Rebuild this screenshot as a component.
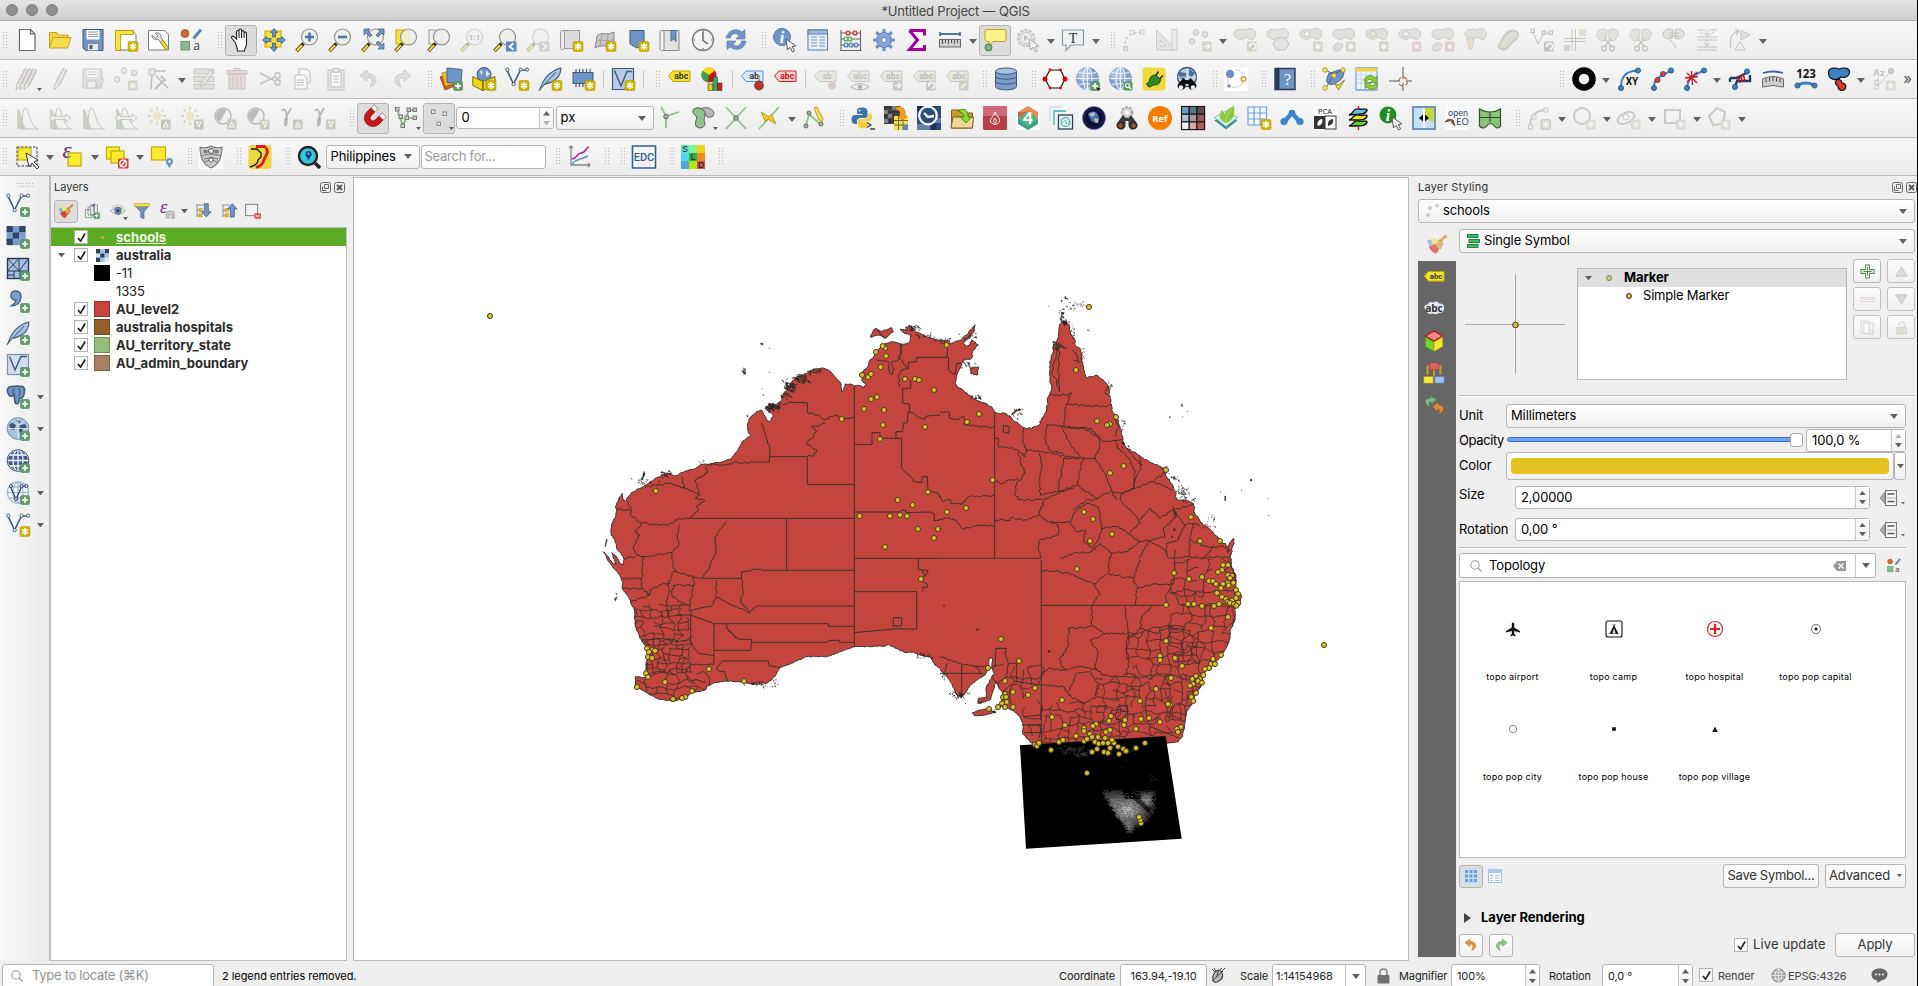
import React from "react";

/* ---------- seeded helpers for the map drawing ---------- */
type Pt = [number, number];
function rng(seed: number) {
  let s = seed;
  return () => {
    s = (s * 1664525 + 1013904223) % 4294967296;
    return s / 4294967296;
  };
}
const parse = (t: string): Pt[] =>
  t.trim().split(/\s+/).map((p) => p.split(",").map(Number) as Pt);

function rough(t: string, amp: number, seed = 7): string {
  const r = rng(seed + t.length * 31);
  const pts = parse(t);
  let out = `M${pts[0][0]} ${pts[0][1]}`;
  for (let i = 1; i < pts.length; i++) {
    const [x0, y0] = pts[i - 1];
    const [x1, y1] = pts[i];
    const d = Math.hypot(x1 - x0, y1 - y0);
    const n = Math.max(1, Math.round(d / 6));
    for (let k = 1; k < n; k++) {
      const f = k / n;
      const o = (r() - 0.5) * 2 * amp;
      out += `L${(x0 + (x1 - x0) * f - ((y1 - y0) / d) * o).toFixed(1)} ${(y0 + (y1 - y0) * f + ((x1 - x0) / d) * o).toFixed(1)}`;
    }
    out += `L${x1} ${y1}`;
  }
  return out;
}
const line = (t: string) => "M" + parse(t).map((p) => p.join(" ")).join("L");

function mesh(x0: number, y0: number, x1: number, y1: number, nx: number, ny: number, seed: number, keep = 0.82): string {
  const r = rng(seed);
  const dx = (x1 - x0) / nx;
  const dy = (y1 - y0) / ny;
  const g: Pt[][] = [];
  for (let j = 0; j <= ny; j++) {
    g.push([]);
    for (let i = 0; i <= nx; i++) g[j].push([x0 + dx * (i + (r() - 0.5) * 0.75), y0 + dy * (j + (r() - 0.5) * 0.75)]);
  }
  const seg = (a: Pt, b: Pt) => {
    const mx = (a[0] + b[0]) / 2 + (r() - 0.5) * dx * 0.45;
    const my = (a[1] + b[1]) / 2 + (r() - 0.5) * dy * 0.45;
    return rough(`${a[0].toFixed(1)},${a[1].toFixed(1)} ${mx.toFixed(1)},${my.toFixed(1)} ${b[0].toFixed(1)},${b[1].toFixed(1)}`, 1.6, Math.floor(r() * 999));
  };
  let out = "";
  for (let j = 0; j <= ny; j++)
    for (let i = 0; i <= nx; i++) {
      if (i < nx && r() < keep) out += seg(g[j][i], g[j][i + 1]);
      if (j < ny && r() < keep) out += seg(g[j][i], g[j + 1][i]);
    }
  return out;
}
function specks(cx: number, cy: number, w: number, h: number, n: number, s: number, seed: number): string {
  const r = rng(seed);
  let out = "";
  for (let i = 0; i < n; i++) {
    const x = cx + (r() + r() - 1) * w;
    const y = cy + (r() + r() - 1) * h;
    out += `M${x.toFixed(1)} ${y.toFixed(1)}l${(r() * s).toFixed(1)} ${((r() - 0.5) * s).toFixed(1)}l${((r() - 0.5) * s).toFixed(1)} ${(r() * s).toFixed(1)}z`;
  }
  return out;
}

/* ---------- map geometry, three sheets at a third of a pixel per unit ---------- */
const W_COAST =
  "1080,183 1066,182 1042,180 1010,170 985,158 965,148 958,135 950,150 930,148 940,158 962,165 960,185 945,192 925,190 905,185 890,190 878,195 868,205 858,215 850,232 840,240 832,262 818,275 808,285 818,292 815,300 828,312 822,322 805,316 793,318 780,312 765,312 762,330 755,335 752,308 735,290 715,270 695,264 670,268 650,280 640,285 620,290 612,300 600,310 600,325 580,340 578,355 560,375 540,372 525,385 550,405 540,425 530,420 515,390 500,395 478,415 473,430 476,460 482,465 455,487 440,515 425,535 400,545 350,553 335,553 315,567 285,573 255,588 235,580 215,585 190,600 160,620 125,637 110,655 105,665 98,655 97,640 85,660 76,680 80,690 78,705 65,735 63,765 75,780 80,805 95,825 102,838 100,855 90,850 80,830 65,818 78,850 70,852 45,820 40,815 60,850 75,868 90,885 98,905 97,925 115,950 125,975 133,990 136,1040 150,1075 168,1100 175,1130 168,1150 168,1170 172,1190 160,1193 136,1190 136,1220 160,1232 180,1245 200,1255 225,1260 260,1262 290,1252 306,1235 330,1235 348,1228 350,1218 380,1207 410,1203 455,1205 475,1210 500,1208 530,1210 545,1200 560,1180 570,1162 600,1152 650,1130 710,1130 760,1112 795,1100 885,1098 895,1093 925,1108 945,1118 970,1116 990,1125 1020,1130 1035,1155 1055,1170 1080,1200";
const E_COAST =
  "0,185 20,195 40,188 60,182 80,165 106,135 100,158 85,172 72,185 76,200 90,195 95,180 115,195 100,210 95,235 70,240 62,260 50,290 45,310 60,325 85,345 120,365 155,380 168,398 200,402 225,425 255,444 275,445 298,435 305,415 320,390 325,350 335,330 330,295 328,260 338,220 340,200 352,180 357,145 362,130 375,125 388,135 393,165 405,180 405,195 420,205 425,230 428,255 437,292 455,290 470,285 490,300 505,320 508,350 515,375 515,390 530,410 540,440 548,480 560,505 590,520 610,535 640,550 668,565 680,590 700,620 712,660 735,660 760,670 765,700 780,725 805,745 825,765 845,785 865,800 880,775 883,790 873,820 873,850 885,880 890,902";
const S_COAST =
  "873,-4 873,20 885,45 890,85 905,110 900,135 885,145 885,180 870,215 870,235 858,265 840,290 820,315 800,325 790,345 785,375 765,405 760,425 740,455 735,490 728,530 715,545 690,548 600,550 400,570 290,556 270,545 248,520 250,495 240,470 215,450 195,440 180,440 185,425 188,400 175,380 168,365 157,400 150,420 115,430 115,415 140,412 138,385 155,350 163,340 155,325 158,295 148,295 145,325 135,345 110,360 90,375 75,400 65,410 50,405 35,370 18,345 0,330";

const W_STRAIGHT = [
  "793,318 793,1100", "652,613 793,613", "538,545 538,530 652,530 652,613", "300,715 793,715", "590,715 590,870", "515,871 793,871",
  "793,835 1080,835", "500,978 793,978", "372,1031 715,1031 715,1039 793,1039", "485,1087 710,1087 720,1081 748,1081 748,1087 793,1087",
  "372,1111 482,1111 485,1078 447,1078 410,1045 410,1032", "258,1005 302,1005 372,1031 372,1153", "793,935 980,935 980,1048", "793,1058 920,1046 980,1048",
  "910,1013 935,1013 935,1038 910,1038 910,1013", "985,835 985,868 1015,872 1005,890 997,870", "1000,890 997,905 1012,912 1012,922 998,922 998,935",
  "793,493 846,493 846,458 870,458 870,475 935,475 935,566 970,598 970,604 995,608 997,590 1012,590 1014,632 1045,640 1058,668 1080,656",
  "793,696 930,696 935,690 948,692 948,698 1020,696 1033,702 1033,722 1080,715", "938,325 938,370 958,372 958,395", "938,325 962,325 962,300",
  "1080,232 980,232 980,245 955,247 955,265 935,270", "918,475 918,455 938,455 940,430 952,428 955,395 970,400 985,412 1005,418 1010,408 1050,405 1065,395 1080,395",
  "578,375 600,367 652,368 652,398", "338,895 455,895 455,875 480,873 490,868 515,868", "398,1143 535,1143 537,1157 570,1162", "302,1005 302,1090 325,1120 372,1127",
  "1064,182 1064,222 1075,225 1076,275",
];
const W_ROUGH = [
  "652,398 680,405 705,420 735,405 755,415 793,413", "705,430 665,440 680,455 650,490 680,510 672,525 652,530", "515,430 525,460 538,500 538,530", "538,545 430,548 400,555 350,553",
  "348,558 350,580 315,600 330,645 285,625 275,590", "285,625 240,610 190,615 165,625", "330,645 315,655 345,662 318,680 325,690 300,715", "115,665 122,690 120,705 155,730 235,735 268,715 300,715",
  "80,687 118,690", "155,730 135,755 150,765 130,800 140,825 160,830 245,818 265,800 262,770 270,735", "102,838 135,830", "245,818 250,860 258,875", "160,830 155,895 98,895",
  "258,875 245,880 240,910 220,910 180,930 180,945 155,925 155,895", "258,875 310,890 338,895", "410,725 375,770 378,820 355,870 335,895", "310,890 312,915 250,915 245,945 270,965 298,978 310,915",
  "380,900 378,950 365,980 302,990 302,1005", "378,950 435,980 480,998 500,978", "455,895 460,940 450,965 480,998", "412,1203 405,1175 380,1168 398,1143", "372,1153 300,1155 285,1180 300,1200 348,1205",
  "928,190 935,215 925,240 905,245 912,270 905,285 895,265 895,245 860,240", "935,270 925,290 930,320", "935,195 930,235 955,265", "98,925 155,925", "120,965 150,955 180,945", "235,900 238,940 230,970 235,1010", "410,1045 440,1075",
];
const E_STRAIGHT = ["164,395 164,835", "0,835 304,835", "304,835 304,900", "190,436 208,440 206,460 190,456 190,436", "0,232 22,232 22,200 14,200", "25,232 25,270 45,285 50,250 64,250"];
const E_ROUGH = [
  "0,395 25,395 30,415 55,420 70,408 75,435 164,442", "0,648 10,665 30,657 35,672 68,672 85,650 164,646", "0,718 30,715 50,722 70,748 100,738 164,737",
  "164,470 175,475 175,500 230,508 255,530 260,510 250,490 250,445", "260,510 305,515 380,530 420,535", "235,515 240,545 255,580 230,610 225,645 240,660 310,657", "164,600 185,612 205,600 235,598",
  "300,520 305,560 298,590 300,645 355,635 370,535 430,535 465,535", "355,635 410,615 430,535", "410,615 470,655 515,632 495,580 465,535 480,500 480,475 430,445 380,445", "375,440 320,435 315,480 330,510 370,520",
  "365,440 390,490 420,530", "380,372 500,380 515,375", "328,345 380,345 395,338 380,372 370,440 450,445 490,485 530,480 550,480", "358,335 350,300 335,280 345,240 355,200 378,205 350,190", "356,205 358,335",
  "530,480 530,500 570,540 585,580 580,625 545,640 515,632 530,660", "164,720 210,722 215,712 250,722 295,705 315,655 400,625", "295,705 330,727 390,727 400,700 440,670 475,680 485,745 475,780 455,810",
  "400,690 440,660 470,658", "330,727 355,735 355,765 300,780 295,805 304,835", "390,727 410,755 435,750 430,785 455,800", "340,870 345,850 375,830 400,820 455,815 480,790", "485,745 535,740 600,785 560,815 515,820 480,790",
  "600,785 625,780 675,810 685,835 690,870", "545,640 540,660 590,710 600,730 570,760", "600,720 630,685 660,715 700,690", "700,680 710,710 670,745 675,770 625,785", "545,640 585,625 640,605 695,630", "580,625 585,600 605,555 600,530",
  "640,605 670,580", "700,690 735,735 760,730 780,740", "760,730 750,775 745,830 685,835", "680,820 680,790 715,780 735,735", "515,820 505,880 505,900", "625,785 600,830 605,860 590,900", "750,780 800,800 860,800", "780,835 830,830 870,830",
  "780,835 825,865 800,880", "304,870 340,870 400,880 455,905", "398,210 410,225 415,245 400,240", "705,715 700,690 760,672", "745,830 790,835 820,800", "525,410 535,440 525,470", "560,505 590,540 605,555", "505,320 495,340 512,350",
];
const S_STRAIGHT = ["304,0 304,552", "304,136 680,136", "230,300 230,365 304,375", "165,320 168,265 200,265 195,280 205,310 230,310", "0,340 130,340", "65,315 65,400", "245,495 304,495", "252,518 304,518", "250,470 304,465", "630,500 720,535"];
const S_ROUGH = [
  "304,30 390,40 460,72 480,100 455,140 455,195 495,222 560,220", "510,-10 505,42 580,55 600,0", "500,42 462,72", "580,55 592,85 585,135", "592,85 640,72 700,72 705,-30", "680,136 678,105 700,72", "690,100 740,88 800,98 845,90",
  "555,136 565,220 560,260 567,300 560,345", "635,140 605,170 600,205 570,235", "455,200 385,205 385,260 358,300 375,330 420,320 470,330", "304,338 330,325 375,330", "495,222 450,240 475,280 465,325 490,345 565,352 620,352",
  "600,205 650,220 680,205 740,210", "304,375 370,380 385,405 430,430", "385,395 410,340 450,335 475,370 465,410", "430,430 470,410 540,420", "0,290 70,315 145,320", "205,310 200,350 175,370", "200,350 230,365", "20,310 15,335", "100,315 130,345",
];

const W_DOTS =
  "197,633 755,417 886,204 878,198 858,216 888,228 872,261 816,285 834,291 843,282 945,297 975,297 987,300 1032,330 843,357 861,351 822,387 882,390 879,435 870,477 1005,441 1014,636 923,660 968,675 809,708 900,708 930,705 951,708 984,747 1044,747 1032,774 885,801 993,897 171,1105 187,1110 195,1112 177,1116 174,1131 186,1134 168,1180 174,1191 225,1206 357,1167 462,1203 141,1221 306,1233 249,1257 286,1251 276,1254 -300,108";
const E_DOTS =
  "447,81 408,270 20,195 117,402 81,426 158,600 78,684 21,696 471,423 510,432 501,435 528,411 551,558 510,579 678,570 432,696 459,717 516,762 450,783 753,711 780,783 840,783";
const S_DOTS =
  "411,27 702,39 747,57 786,51 849,15 864,15 846,30 834,36 864,45 876,47 870,54 807,63 819,63 828,72 849,72 864,68 866,76 880,68 843,84 831,99 888,90 894,102 846,111 858,117 864,125 876,121 888,114 870,129 882,132 895,128 889,137 837,132 822,138 786,138 762,132 744,132 678,135 864,171 813,204 678,243 843,285 819,297 660,288 660,300 705,294 813,312 825,312 807,324 795,327 726,318 790,345 693,354 768,348 757,357 780,357 774,363 786,368 759,372 750,377 768,399 754,411 760,423 648,387 600,423 690,434 684,432 603,477 627,474 660,486 723,501 711,507 714,516 588,507 555,480 552,495 513,468 507,483 468,492 459,498 432,504 432,513 498,516 510,510 450,522 375,495 408,528 336,471 366,420 285,384 264,405 237,303 183,237 144,324 195,363 219,396 195,402 189,412 198,411 200,426 186,430 174,441 195,441 219,441 147,447 333,570 285,554 291,558 297,549 357,546 369,540 432,543 441,537 456,531 474,531 495,534 465,546 476,551 489,549 504,549 522,549 471,567 456,576 492,576 504,579 510,564 516,540 534,560 537,582 550,567 558,573 588,564 615,549 441,639 603,790 601,780 597,771 1152,255";

const RED = "#c4453d";
const INK = "#37302d";

function Dots({ pts }: { pts: string }) {
  return (
    <g fill="#e3c220" stroke="#3d3826" strokeWidth="3">
      {parse(pts).map(([x, y], i) => (
        <circle key={i} cx={x} cy={y} r="7.6" />
      ))}
    </g>
  );
}

/* brightness of the island relief, brightest on the central plateau */
function Relief() {
  const r = rng(99);
  const cells: React.ReactNode[] = [];
  for (let y = 690; y < 822; y += 3)
    for (let x = 482; x < 650; x += 3) {
      const left = 484 + Math.max(0, y - 705) * 0.68 + (y < 700 ? (700 - y) * 0.6 : 0);
      const right = y < 745 ? 646 : y < 785 ? 644 - (y - 745) * 0.5 : 604 - (y - 785) * 0.8;
      const notch = y < 715 && x > 545 && x < 600 && r() < 0.75;
      if (x < left || x > right || notch) continue;
      const edge = Math.min(x - left, right - x, 822 - y, y - 686);
      if (edge < 14 && r() > 0.25 + edge / 18) continue;
      const near = Math.max(0, 1 - Math.hypot((x - 562) / 1.2, y - 748) / 55) + Math.max(0, 0.8 - Math.hypot(x - 620, y - 718) / 32) + Math.max(0, 0.35 - Math.hypot(x - 515, y - 720) / 90) + Math.max(0, 0.5 - Math.hypot(x - 565, y - 800) / 40);
      const valley = Math.abs(y - 722 - (x - 595) * 0.9) < 9 && x > 575 && x < 630;
      const c = Math.round(Math.min(245, (valley ? 25 : 45) + near * 190 * (0.45 + r() * 0.8) + r() * 30) * (valley ? 0.5 : 1));
      cells.push(<rect key={`${x}-${y}`} x={x} y={y} width="3" height="3" fill={`rgb(${c},${c},${c})`} />);
    }
  return <>{cells}</>;
}

function AustraliaMap() {
  const wc = rough(W_COAST, 1.6);
  const ec = rough(E_COAST, 2.4);
  const sc = rough(S_COAST, 1.4);
  return (
    <svg className="block h-full w-full" viewBox="354 178 1054 782" preserveAspectRatio="xMinYMin slice">
      <defs>
        <clipPath id="cw"><path d={wc} /></clipPath>
        <clipPath id="cs"><path d={line(S_COAST) + "L0 -4"} /></clipPath>
      </defs>
      <g transform="translate(590 280) scale(.33333)" fill="none" stroke={INK} strokeWidth="3">
        <path d={wc} fill={RED} />
        <path d={rough("842,172 850,150 860,145 875,155 905,143 910,155 885,175 865,165 842,172", 2)} fill={RED} />
        <path d="M860 148L872 162L885 174" />
        <g clipPath="url(#cw)" strokeWidth="2.6">
          <path d={mesh(130, 975, 300, 1080, 6, 6, 4)} />
          <path d={mesh(150, 1080, 300, 1180, 8, 7, 5, 0.85)} />
          <path d={mesh(140, 1180, 350, 1250, 7, 3, 6, 0.75)} />
        </g>
        {W_STRAIGHT.map((t) => <path key={t} d={line(t)} />)}
        {W_ROUGH.map((t) => <path key={t} d={rough(t, 3)} />)}
        <g fill="#2b2624" stroke="#2b2624" strokeWidth="1.1">
          <path d={specks(598, 318, 24, 22, 34, 10, 11)} />
          <path d={specks(630, 293, 32, 12, 30, 10, 25)} />
          <path d={specks(672, 272, 30, 9, 16, 8, 18)} />
          <path d={specks(545, 380, 24, 12, 40, 11, 12)} />
          <path d={specks(582, 345, 14, 16, 12, 8, 13)} />
          <path d={specks(160, 610, 60, 22, 26, 4, 14)} />
          <path d={specks(222, 582, 20, 9, 18, 7, 15)} />
          <path d={specks(500, 1212, 52, 8, 28, 6, 16)} />
          <path d={specks(555, 1205, 18, 22, 10, 4, 17)} />
          <path d={specks(965, 145, 32, 12, 22, 7, 19)} />
          <path d={specks(1005, 165, 36, 10, 12, 6, 20)} />
          <path d={specks(1000, 1130, 32, 14, 16, 6, 21)} />
          <path d={specks(460, 270, 8, 13, 8, 8, 22)} />
          <path d={specks(78, 955, 12, 22, 7, 6, 23)} />
          <path d={specks(330, 545, 14, 8, 5, 3, 24)} />
          <path d="M511 190l8 0l0 4l-6 0zM49 778l3 0l-5 22l-2-2zM162 574l3 8l-3 8l-4-4zM152 598l10-14l-4 16zM470 405l5 3l-3 3z" />
          <path d="M538 205h1v2zM538 277h1v2zM518 344h3v3zM515 326h2v1zM1060 976h4v3h-4z" />
        </g>
        <Dots pts={W_DOTS} />
      </g>
      <g transform="translate(940 280) scale(.33333)" fill="none" stroke={INK} strokeWidth="3">
        <path d={ec + "L0 902"} fill={RED} stroke="none" />
        <path d={ec} />
        <path d={rough("92,265 115,260 112,285 92,280 92,265", 2)} fill={RED} />
        <path d="M215 405q8-18 28-16q-14 2-24 14z" fill={RED} />
        {E_STRAIGHT.map((t) => <path key={t} d={line(t)} />)}
        {E_ROUGH.map((t) => <path key={t} d={rough(t, 3)} />)}
        <g fill="#2b2624" stroke="#2b2624" strokeWidth="1.1">
          <path d={specks(362, 100, 7, 20, 14, 8, 31)} />
          <path d={specks(372, 55, 16, 10, 6, 6, 32)} />
          <path d={specks(395, 82, 20, 18, 22, 3, 33)} />
          <path d={specks(422, 72, 20, 10, 12, 3, 34)} />
          <path d={specks(374, 124, 14, 6, 14, 8, 35)} />
          <path d={specks(348, 198, 14, 16, 22, 8, 36)} />
          <path d={specks(400, 160, 10, 30, 18, 3, 37)} />
          <path d={specks(424, 225, 12, 40, 20, 3, 38)} />
          <path d={specks(442, 152, 10, 8, 4, 3, 39)} />
          <path d={specks(85, 168, 30, 12, 18, 6, 40)} />
          <path d={specks(80, 255, 24, 12, 12, 6, 41)} />
          <path d={specks(104, 352, 18, 7, 14, 8, 42)} />
          <path d={specks(232, 398, 18, 20, 12, 6, 43)} />
          <path d={specks(508, 315, 10, 22, 14, 4, 44)} />
          <path d={specks(555, 490, 14, 20, 12, 6, 45)} />
          <path d={specks(672, 570, 18, 14, 12, 5, 46)} />
          <path d={specks(705, 595, 20, 10, 18, 4, 47)} />
          <path d={specks(728, 635, 24, 22, 34, 5, 48)} />
          <path d={specks(740, 662, 28, 9, 14, 5, 49)} />
          <path d={specks(815, 712, 18, 10, 12, 3, 50)} />
          <path d={specks(800, 735, 30, 14, 12, 4, 51)} />
          <path d={specks(548, 430, 8, 24, 10, 4, 52)} />
          <path d={specks(866, 812, 8, 18, 10, 6, 53)} />
          <path d={specks(0, 178, 32, 8, 12, 6, 54)} />
          <path d="M725 372h2v8h-2zM688 410h3v3h-3zM742 394h2v2zM727 410h2v2zM931 598h5v5h-5zM903 631h3v1zM854 648h3v14h-3zM840 636h3v1zM983 655h2v1zM985 706h2v2zM325 78h2v1zM702 743l6 6l-8 4zM695 768h4v4h-4zM0 744h3v5h-3z" />
        </g>
      </g>
      <g transform="translate(940 560) scale(.33333)" fill="none" stroke={INK} strokeWidth="3">
        <path d={sc + "L0 -4"} fill={RED} stroke="none" />
        <path d={sc} />
        <path d={rough("97,458 120,450 150,445 158,455 168,457 135,465 105,467 97,458", 1)} fill={RED} />
        <g clipPath="url(#cs)" strokeWidth="2.6">
          <path d={mesh(310, 430, 560, 552, 10, 6, 61, 0.72)} />
          <path d={mesh(470, 350, 690, 480, 10, 6, 62, 0.72)} />
          <path d={mesh(570, 205, 780, 350, 7, 5, 63, 0.78)} />
          <path d={mesh(690, 140, 890, 300, 6, 6, 64, 0.78)} />
          <path d={mesh(680, 350, 800, 480, 6, 6, 65, 0.78)} />
          <path d={mesh(560, 470, 720, 520, 5, 2, 66, 0.7)} />
          <path d={mesh(705, -30, 890, 135, 6, 5, 67, 0.62)} />
          <path d={mesh(165, 320, 300, 470, 5, 5, 68, 0.62)} />
          <path d={mesh(245, 500, 304, 552, 2, 2, 69, 0.6)} />
        </g>
        {S_STRAIGHT.map((t) => <path key={t} d={line(t)} />)}
        {S_ROUGH.map((t) => <path key={t} d={rough(t, 3)} />)}
        <g fill="#2b2624" stroke="#2b2624" strokeWidth="1.1">
          <path d={specks(60, 408, 18, 10, 20, 6, 71)} />
          <path d={specks(10, 350, 12, 12, 8, 4, 72)} />
          <path d={specks(34, 400, 12, 10, 7, 6, 73)} />
          <path d={specks(160, 455, 10, 5, 8, 4, 74)} />
          <path d={specks(84, 400, 6, 8, 4, 4, 75)} />
          <path d={specks(118, 428, 8, 4, 6, 4, 76)} />
          <path d="M324 272h6v5h-6zM110 207h5v4h-5zM10 136h4v3h-4zM75 430h3v2z" />
        </g>
        <path d="M240 556L677 528L725 836L258 866Z" fill="#000" stroke="none" />
        <g stroke="none">
          <path d={specks(395, 568, 55, 14, 90, 9, 81)} fill="#2b2b2b" />
          <path d={specks(422, 582, 26, 9, 60, 5, 82)} fill="#5d5d5d" />
          <path d={specks(545, 568, 60, 14, 80, 6, 83)} fill="#3b3b3b" />
          <path d={specks(638, 655, 14, 18, 20, 4, 84)} fill="#555" />
          <path d={specks(558, 602, 3, 3, 4, 4, 85)} fill="#777" />
          <Relief />
        </g>
        <g transform="translate(0 -840)"><Dots pts={E_DOTS} /></g>
        <Dots pts={S_DOTS} />
      </g>
    </svg>
  );
}

/* ---------- icon parts ---------- */
const B = "#7b9ccd";
const D = "#3f5878";
const G = "#8d8d85";
const Plus = <g><rect x="14.5" y="14.5" width="9" height="9" rx="1.5" fill="#5f9e62" stroke="#4c8450" strokeWidth=".6" /><path d="M19 16.3v5.4M16.3 19h5.4" stroke="#fff" strokeWidth="1.8" /></g>;
const Star = <g><rect x="14" y="13.5" width="10" height="10" rx="1.5" fill="#d0b400" stroke="#a89200" strokeWidth=".5" /><path d="M19 15v7M16 16.8l6 3.4M16 20.2l6-3.4" stroke="#fff" strokeWidth="1.6" /></g>;
const Badge = ({ t, c = "#b9b9a5" }: { t?: string; c?: string }) => (
  <g><rect x="14" y="13.5" width="9.5" height="10" rx="1.3" fill={c} />
    {t === "up" && <path d="M16.5 21l2.3-5 2.3 5z" fill={c} stroke="#fff" strokeWidth="1.1" />}
    {t === "dn" && <path d="M16.5 16l2.3 5 2.3-5z" fill={c} stroke="#fff" strokeWidth="1.1" />}
    {t === "x" && <path d="M16.8 16.5l4 4M20.8 16.5l-4 4" stroke="#fff" strokeWidth="1.4" />}
    {t === "r" && <path d="M15.8 18.5h5.5m-2.3-2.6l2.6 2.6-2.6 2.6" stroke="#fff" strokeWidth="1.5" fill="none" />}
    {t === "o" && <path d="M19.5 21.5a3 3 0 1 0-3-3l1.6-1" stroke="#fff" strokeWidth="1.3" fill="none" />}
    {t === "e" && <path d="M16 21.5l4.500-5" stroke="#fff" strokeWidth="1.7" />}
    {!t && <path d="M18.8 15.3v6.4M16 16.9l5.6 3.2M16 20.1l5.6-3.2" stroke="#fff" strokeWidth="1.3" />}
  </g>
);
const mag = (over?: React.ReactNode, under?: React.ReactNode) => (
  <g>{under}
    <path d="M8.5 15.5L1.5 23" stroke="#2b2b1f" strokeWidth="3.4" /><path d="M7 17.3L1.8 22.7" stroke="#f6dd2e" strokeWidth="2.1" />
    <circle cx="14.5" cy="9" r="8" fill="#eef0ea" fillOpacity=".85" stroke="#8b8b85" strokeWidth="1.1" />{over}</g>
);
const vline = (
  <g fill="none" stroke={D} strokeWidth="1.6"><path d="M2.2 3.5L8.5 17L15.5 3h6" /><g fill="#fff" strokeWidth="1"><circle cx="2.3" cy="2.7" r="1.6" /><circle cx="15.6" cy="2.6" r="1.6" /><circle cx="22" cy="2.6" r="1.6" /><circle cx="8.6" cy="17.2" r="1.6" /></g></g>
);
const feather = <g><path d="M1.5 23.5C5 14 9 5 22.8 1C23 9 17 15 6 17.5" fill="#a9c1e3" stroke={D} strokeWidth="1.1" /><path d="M1 23.5L18 5" stroke={D} strokeWidth="1" /></g>;
const globe = (c = "#7b9ccd", bg = "#dfe8f5") => (
  <g fill="none" stroke={c} strokeWidth="1.3"><circle cx="12" cy="11.5" r="10.6" fill={bg} /><ellipse cx="12" cy="11.5" rx="5" ry="10.6" /><path d="M12 1v21M1.5 11.5h21M3 6h18M3 17h18" /></g>
);
const bigGlobe = (
  <g fill="none"><circle cx="11.5" cy="11.5" r="11" fill="#7fa3d4" stroke="#8d9fb8" /><circle cx="8" cy="8" r="6.5" fill="#b9cdea" opacity=".7" /><g stroke="#f1f5fb" strokeWidth="1.2"><ellipse cx="11.5" cy="11.5" rx="4.500" ry="10.800" /><path d="M11.500 .6v22M.800 11.500h21.500M3 5.500q8.500 2 17 0M3 17.500q8.500-2 17 0" /></g></g>
);
const blob = <path d="M1 6C1 1 8 .5 12 2C17-1 23 1 22.5 6C22 11 19 13 15 10C11 8 10 13 6 11C3 10 1 9 1 6Z" fill="#cfd2c8" stroke="#a5a79c" strokeWidth="1" />;
const blobHole = <g>{blob}<ellipse cx="8" cy="6" rx="3" ry="2.4" fill="#f3f3f3" stroke="#a5a79c" /></g>;
const scissors = <g stroke={G} fill="none" strokeWidth="1.2"><path d="M9 11l6 7M15 11l-6 7" /><circle cx="8" cy="20.5" r="2.3" /><circle cx="16" cy="20.5" r="2.3" /></g>;
const blobCut = <g>{<path d="M11 2C6-1 0 3 1 8C2 13 8 14 10 11ZM13 2C18-1 24 3 22 8C20 13 15 14 13 11Z" fill="#cfd2c8" stroke="#a5a79c" />}{scissors}</g>;
const tag = (fill: string, st: string, text = "abc", tc = "#333") => (
  <g><path d="M1.5 9L6 4h17v10.500H6z" fill={fill} stroke={st} strokeWidth="1" /><text x="14.2" y="12.2" fontSize="8.6" fontWeight="700" textAnchor="middle" fill={tc} fontFamily="Roboto, sans-serif">{text}</text></g>
);
const hist = <g><path d="M2 23V3c3 0 4 4 5 9s2 9 5 11z" fill="#8fa889" /><path d="M6 23C8 14 7 2 10.5 2S15 22 23.500 23z" fill="none" stroke="#a58080" /></g>;
const cursor = <path d="M13 11l1.500 11 2.600-2.800L19.500 24l2-1.200-2.300-4.300 3.800-.6z" fill="#fff" stroke="#555" strokeWidth="1" />;
const node = (x: number, y: number, c = "#3d82c4") => <circle cx={x} cy={y} r="2.6" fill={c} stroke="#1d3f66" strokeWidth=".7" />;
const styleIcon = <g><circle cx="5" cy="5.500" r="4" fill="#d0692e" stroke="#9c4a1c" strokeWidth=".7" /><path d="M13.500 10.500L21 1.500" stroke="#5f84b8" strokeWidth="3" /><rect x="1" y="13.500" width="8.500" height="8.500" fill="#8cb98c" stroke="#5f9462" strokeWidth=".9" /><text x="16.500" y="22" fontSize="12" textAnchor="middle" fill="#333" fontFamily="Open Sans, sans-serif">a</text></g>;
const undo = (c: string, s: string) => <path d="M10 3L3 8.500l7 5.500v-3.500c5 0 6.500 3 3 9.500c9-3 8-13-3-13.500z" fill={c} stroke={s} strokeWidth=".8" />;
const redo = (c: string, s: string) => <g transform="matrix(-1 0 0 1 24 0)">{undo(c, s)}</g>;
const pencil = (x: number, f = "#c9cdbd") => <g transform={`translate(${x} 0)`}><path d="M3 22.500l1.500-6.500L12 1.500l4 2L8.500 18z" fill={f} stroke={G} strokeWidth=".9" /><path d="M3 22.500l1.500-6.500 4 2z" fill="#f0f0f0" stroke={G} strokeWidth=".7" /><path d="M6.500 17L14 2.500" stroke="#eee" strokeWidth="1" /></g>;
const checker = (a: string, b: string, c: string) => (
  <g>{[[0, 0, b], [6, 0, c], [12, 0, b], [0, 6, c], [6, 6, a], [12, 6, c], [0, 12, b], [6, 12, c], [12, 12, c]].map(([x, y, f], i) => <rect key={i} x={Number(x) + 0.5} y={Number(y) + 1} width="6.200" height="6.200" fill={String(f)} />)}</g>
);
const cube = <g stroke="#7a1a1a" strokeWidth=".8"><path d="M12 1l9.500 5.500L12 12 2.500 6.500z" fill="#f08a8a" stroke="#c40f0f" strokeWidth="1.300" /><path d="M2.500 7.500L12 13v10.500L2.500 18z" fill="#76d92e" stroke="#3f8a12" /><path d="M21.500 7.500L12 13v10.500l9.500-5.500z" fill="#f4ea2c" stroke="#a79a10" /></g>;
const broom = <g><path d="M14 10L22.500 2.500" stroke="#c9973b" strokeWidth="3.200" /><path d="M9 9l6-1.500 3.500 4-3 6-5-1z" fill="#d8a548" stroke="#a37b28" strokeWidth=".8" /><path d="M1 8q5 0 8-3l5 4-8 6z" fill="#f4e36a" /><path d="M1 8l4.500-.8L8 13l-4 2z" fill="#7fb0e0" /><path d="M3 15l7-3 4 6-2.500 4.500q-6-1-8.500-7.500z" fill="#d9402f" /></g>;
const cyl = <g fill={B} stroke={D} strokeWidth="1"><path d="M1.500 4.500v15c0 4.500 21 4.500 21 0v-15" /><path d="M1.500 9.500c0 3.500 21 3.500 21 0M1.500 14.500c0 3.500 21 3.500 21 0" fill="none" /><ellipse cx="12" cy="4.200" rx="10.500" ry="3.200" fill="#a9c1e3" /></g>;
const binocs = <g fill="#111"><path d="M8.500 11L3 17a3.800 3.800 0 1 0 7.500 3v-3h3v3a3.800 3.800 0 1 0 7.500-3l-5.500-6-2 2h-3z" /><circle cx="6" cy="20.500" r="2.200" fill="#eee" /><circle cx="18" cy="20.500" r="2.200" fill="#eee" /></g>;
const snapV = <g fill="none" stroke="#8fbf8a" strokeWidth="2"><path d="M3 3l6 17L15 4h6M12 12h8" /><g fill="#cfcfcf" stroke="#777" strokeWidth="1"><rect x="1.500" y="1.500" width="3.500" height="3.500" /><rect x="13" y="2" width="3.500" height="3.500" /><rect x="19" y="2" width="3.500" height="3.500" /><rect x="5" y="9" width="3.500" height="3.500" /><rect x="11" y="10" width="3.500" height="3.500" /><rect x="19" y="10" width="3.500" height="3.500" /><rect x="7" y="18" width="3.500" height="3.500" /></g></g>;
const sun = <g><circle cx="10" cy="10" r="4.500" fill="#e8dc9a" /><path d="M10 1v3M10 16v3M1 10h3M16 10h3M3.500 3.500l2 2M14.500 14.500l2 2M16.500 3.500l-2 2M3.500 16.500l2-2" stroke="#b8b070" strokeWidth="1.500" /></g>;
const contrast = <g><circle cx="10" cy="10" r="8" fill="#eee" stroke="#777" strokeWidth="1.500" /><path d="M10 3A7 7 0 0 0 10 17z" fill="#777" transform="rotate(30 10 10)" /></g>;
const gamma = <path d="M3 5c3-5 5 3 5 8 0 8-3 8-2 2 1-5 4-9 6-13" fill="none" stroke="#666" strokeWidth="1.700" />;

const ICONS: Record<string, React.ReactNode> = {
  new: <path d="M4.500 1.500h11L20 6v16.500H4.500zM15.500 1.500V6H20" fill="#fff" stroke="#6a6a6a" strokeWidth="1.200" />,
  open: <g fill="#f2d33b" stroke="#c79f1c"><path d="M1.500 20V4.500h7l2 2.500H20v3" /><path d="M1.500 20L5 9.500h18L19.500 20z" fill="#f8de4d" /></g>,
  save: <g><path d="M2 1.500h20v21H4.500L2 20z" fill="#6f94c8" stroke={D} /><rect x="5.500" y="2" width="13" height="9.500" fill="#fff" /><path d="M7 4h10M7 6.300h10M7 8.600h10" stroke="#999" /><rect x="6.500" y="15.500" width="11" height="7" fill="#e9e9e9" stroke="#777" strokeWidth=".7" /><rect x="8.500" y="17" width="3" height="4" fill={D} /></g>,
  layout: <g><path d="M3 2.500h15l4 4v15.500H3z" fill="#fff" stroke="#777" /><path d="M1.500 2.500h18v4h-13v16h-5z" fill="#f6e23a" stroke="#a8920e" strokeWidth=".8" />{Star}</g>,
  wrench: <g><path d="M1.500 2.500h16l4 4v15.500h-20z" fill="#fff" stroke="#777" /><path d="M5 7a4 4 0 0 0 6 4l8 11 2.500-2L14 9.500A4 4 0 0 0 8.500 5L11 8 8.500 10z" fill="#e5e5da" stroke="#777" strokeWidth=".9" /><path d="M13.500 14l5.500 8 2.500-2-6-8z" fill="#f6dd2e" stroke="#8d7b10" strokeWidth=".7" /></g>,
  style: styleIcon,
  hand: <path d="M6 14L3 10.500c-1.500-2 1-3 2.200-1.700L7.500 11V4c0-2 2.500-2 2.500 0V2.500c0-2 2.600-2 2.600 0V4c0-1.900 2.500-1.900 2.500 0v1.500c0-1.800 2.400-1.800 2.400 0V16c0 3-2 4-2 7H8.500c0-3-1-5-2.500-9zM10 4v6M12.600 4v6M15.100 5v5" fill="#fff" stroke="#222" strokeWidth="1.100" />,
  pan: <g><rect x="3" y="3" width="16" height="16" fill="#f6e23a" stroke="#c4a800" /><path d="M12 .5l3.500 4h-2V9h-3V4.500h-2zM12 23.500l3.500-4h-2V15h-3v4.500h-2zM.5 12l4-3.500v2H9v3H4.500v2zM23.500 12l-4-3.500v2H15v3h4.500v2z" fill="#6f94c8" stroke={D} strokeWidth=".8" /></g>,
  zin: mag(<path d="M14.500 4.500v9M10 9h9" stroke="#4c74ad" strokeWidth="2.600" />),
  zout: mag(<path d="M10 9h9" stroke="#4c74ad" strokeWidth="2.600" />),
  full: mag(<path d="M3 1h6L7 3l4 4-2 2-4-4-2 2zM23 1h-6l2 2-4 4 2 2 4-4 2 2zM23 21h-6l2-2-4-4 2-2 4 4 2-2z" fill="#6f94c8" stroke={D} strokeWidth=".7" />),
  zsel: mag(null, <rect x="2" y="2" width="13" height="14" fill="#f6e23a" stroke="#c4a800" />),
  zlay: mag(null, <rect x="2" y="2" width="13" height="14" fill="#eee" stroke="#999" />),
  znat: <g opacity=".35">{mag(<text x="14.500" y="12" fontSize="8" fontWeight="700" textAnchor="middle" fill="#555" fontFamily="Roboto">1:1</text>)}</g>,
  zlast: mag(<g><rect x="13" y="13.500" width="10.500" height="10" fill="#5c86bd" /><path d="M20.500 15.300l-4 3.200 4 3.200" fill="none" stroke="#fff" strokeWidth="1.800" /></g>),
  znext: <g opacity=".35">{mag(<g><rect x="13" y="13.500" width="10.500" height="10" fill="#999" /><path d="M16.500 15.300l4 3.200-4 3.200" fill="none" stroke="#fff" strokeWidth="1.800" /></g>)}</g>,
  nmap: <g><path d="M3 2.500h17.500v18H3z" fill="#dcdcdc" stroke="#999" /><path d="M1.500 4c0-2 4-2 4 0v16c0 2-4 2-4 0z" fill="#eee" stroke="#999" />{Star}</g>,
  n3d: <g><path d="M5 8c5-5 9 0 17-4v12c-7 4-12 0-19 4z" fill="#c9c9c9" stroke="#888" /><path d="M4 14c6-4 11 1 18-3M10 5L8 18M16 6l-1 13" fill="none" stroke="#999" strokeWidth=".8" />{Star}</g>,
  nbm: <g><path d="M5 2.500h14v15L12 20 5 16z" fill="#6f94c8" stroke={D} />{Star}</g>,
  sbm: <g><path d="M4 2.500h17v20H4z" fill="#e2e2e2" stroke="#888" /><path d="M2 4c0-2 4-2 4 0v17c0 2-4 2-4 0z" fill="#f3f3f3" stroke="#888" /><path d="M13 2.500h5v11l-2.500-2.500L13 13z" fill="#6f94c8" stroke={D} strokeWidth=".8" /></g>,
  clock: <g><circle cx="12" cy="12" r="10.500" fill="#f4f4f4" stroke="#777" strokeWidth="1.300" /><path d="M12 4v8.500l5 3.500" fill="none" stroke="#555" strokeWidth="1.300" /><path d="M12 2.500v1.500M12 20v1.500M2.500 12H4M20 12h1.500" stroke="#555" /></g>,
  refresh: <g fill="#6f94c8" stroke="#5578aa" strokeWidth=".6"><path d="M2 10C3 3 12-1 18 4l3-2.500V11h-9l3-3.500C11 4 7 6 6.500 10z" /><path d="M22 13c-1 8-10 11-16 6l-3 2.500V13h9l-3 3.500c4 3 8 1 8.500-3.500z" /></g>,
  info: <g><circle cx="9" cy="9" r="8.500" fill="#6f94c8" stroke="#5578aa" /><text x="9" y="15" fontSize="16" fontWeight="700" fontStyle="italic" textAnchor="middle" fill="#fff" fontFamily="Liberation Serif, serif">i</text>{cursor}</g>,
  table: <g><rect x="2" y="2" width="19.500" height="20" fill="#e8f0fa" stroke="#5578aa" /><rect x="2" y="2" width="19.500" height="4" fill="#9fb9de" stroke="#5578aa" /><path d="M5 9h6M5 12h6M5 15h6M5 18h6M13.500 9h5.500M13.500 12h5.500M13.500 15h5.500M13.500 18h5.500" stroke="#6f94c8" strokeWidth="1.200" /></g>,
  abacus: <g fill="none" stroke="#666" strokeWidth="1.100"><path d="M2 22V2M21.500 22V2M1 22.500h21.500M2 5h19.500M2 11h19.500M2 17h19.500" /><circle cx="9" cy="5" r="2" stroke="#c22" fill="#fbb" /><circle cx="16" cy="5" r="2" stroke="#c22" fill="#fbb" /><circle cx="7" cy="11" r="2" stroke="#4a4" fill="#cec" /><circle cx="11" cy="11" r="2" stroke="#4a4" fill="#cec" /><circle cx="7" cy="17" r="2" stroke="#47a" fill="#bdf" /><circle cx="12" cy="17" r="2" stroke="#47a" fill="#bdf" /><circle cx="17" cy="17" r="2" stroke="#47a" fill="#bdf" /></g>,
  gear: <g><path d="M12 1v22M1 12h22M4.200 4.200l15.600 15.600M19.800 4.200L4.200 19.800" stroke="#6f94c8" strokeWidth="3.200" /><circle cx="12" cy="12" r="7.500" fill="#86a6d6" stroke="#5f84b8" /><circle cx="12" cy="12" r="2.600" fill="#f3f3f3" stroke="#5f84b8" /></g>,
  sigma: <path d="M4.500 2.500h15v5M19.500 17v4.500h-15l8-9.500-8-9.500" fill="none" stroke="#a3009b" strokeWidth="3" />,
  ruler: <g><path d="M2 6h20M2 4v4M22 4v4" stroke="#4c74ad" strokeWidth="1.800" /><rect x="1.500" y="11.500" width="21" height="7.500" fill="#cfcfcf" stroke="#666" /><path d="M4.500 12v4M7.500 12v3M10.500 12v4M13.500 12v3M16.500 12v4M19.500 12v3" stroke="#444" strokeWidth=".9" /></g>,
  tip: <g><path d="M4 1.500h17q2 0 2 2v8q0 2-2 2H10l-4 4.500v-4.500H4q-2 0-2-2v-8q0-2 2-2z" fill="#fdf38a" stroke="#b9a21a" /><circle cx="5.500" cy="19.500" r="3.500" fill="#7fae84" stroke="#4f7a54" /></g>,
  play: <g opacity=".5"><circle cx="10" cy="10" r="8" fill="#ddd" stroke="#999" strokeWidth="2.500" strokeDasharray="3 1.500" /><circle cx="10" cy="10" r="5.500" fill="#eee" stroke="#999" /><path d="M8 7l5 3-5 3z" fill="#999" />{cursor}</g>,
  text: <g><path d="M1.500 2h21v15H10l-5 5.500V17H1.500z" fill="#eef2f4" stroke="#8499a5" strokeWidth="1.200" /><text x="12" y="14.500" fontSize="14" textAnchor="middle" fill="#333" fontFamily="Liberation Serif, serif">T</text></g>,
  dArc: <g opacity=".4" fill="none" stroke={G}><path d="M3 21V14C4 8 9 5 20 4" strokeDasharray="3 2" strokeWidth="1.500" /><rect x="1.500" y="18.500" width="4" height="4" /><rect x="18" y="2" width="4" height="4" /><rect x="8" y="2.500" width="4" height="4" /></g>,
  dTri: <g opacity=".4" fill="#ddd0d0" stroke={G}><path d="M1.500 2v20h20z" /><path d="M5 12v6h6z" fill="#f4f4f4" /><rect x="17" y="1.500" width="5" height="20.500" fill="#e4e4d4" /></g>,
  dMove: <g opacity=".5"><circle cx="8" cy="4.500" r="2.800" fill="#ccc" stroke="#999" /><circle cx="17" cy="6.500" r="2.800" fill="#ccc" stroke="#999" /><circle cx="4" cy="13.500" r="2.800" fill="#ccc" stroke="#999" /><Badge t="r" /></g>,
  dRot: <g opacity=".55">{blob}<Badge t="o" /></g>,
  dSimp: <g opacity=".5">{blob}<path d="M11 10h8l4 6-4 6h-8l-4-6z" fill="#d5d9dc" stroke={G} /></g>,
  dRing: <g opacity=".55">{blobHole}<Badge /></g>,
  dPart: <g opacity=".55">{blob}<ellipse cx="6" cy="19" rx="5" ry="3.500" transform="rotate(-30 6 19)" fill="#cfd2c8" stroke="#a5a79c" /><Badge /></g>,
  dFill: <g opacity=".55">{blob}<ellipse cx="8" cy="6" rx="3.500" ry="2.700" fill="#d8dbc0" stroke="#a5a79c" /><Badge /></g>,
  dDelR: <g opacity=".5">{blobHole}<Badge t="x" c="#d0b0b0" /></g>,
  dDelP: <g opacity=".5">{blob}<ellipse cx="6" cy="19" rx="5" ry="3.500" transform="rotate(-30 6 19)" fill="#cfd2c8" stroke="#a5a79c" /><Badge t="x" c="#d0b0b0" /></g>,
  dResh: <g opacity=".5">{blob}<path d="M3 10c0 4 2 5 2 11 5 1 4-6 5-11z" fill="#d8cdb2" stroke="#b5a98f" /></g>,
  dOff: <g opacity=".5"><path d="M3 15c3-3 3-9 10-12 6-2 10 2 7 7-3 4-7 5-9 9-3 5-12 2-8-4z" fill="#c9cdb9" stroke="#a5a79c" strokeWidth="2" /></g>,
  dVrot: <g opacity=".5"><path d="M2.500 3L8 16 14 5h7" fill="none" stroke={G} /><rect x="1" y="1" width="3.500" height="3.500" fill="#ddd" stroke={G} /><rect x="12" y="3" width="3.500" height="3.500" fill="#ddd" stroke={G} /><rect x="19" y="3" width="3.500" height="3.500" fill="#ddd" stroke={G} /><Badge t="o" c="#999" /></g>,
  dTrim: <g opacity=".45"><path d="M9 1v22M12.500 1v22M1 10.500h22M1 13.500h22" stroke={G} /><rect x="1" y="17" width="6" height="6" fill="#c9a9a9" /><rect x="16" y="1" width="7" height="7" fill="#c9c9a9" /></g>,
  dSplit: <g opacity=".5">{blobCut}</g>,
  dMerge: <g opacity=".5"><path d="M11 2C6-1 0 3 1 7s7 5 9 3zM13 2c5-3 10 1 9 5s-7 5-9 3zM7 5h10M7 8h10" fill="#cfd2c8" stroke={G} /><path d="M8 12c3 2 4 4 6 8" stroke={G} fill="none" /></g>,
  dAlign: <g opacity=".45" stroke={G} fill="none"><path d="M2 2h8M14 2h8M2 9h20M2 12h20M2 19h20M2 22h20M12 2v5M9 5l3 3 3-3M12 12v5M9 15l3 3 3-3M5 4l3 2M19 4l-3 2" /></g>,
  dFlip: <g opacity=".45" stroke={G} fill="none"><path d="M3 20C1 10 4 5 10 3M7 1l4 2-3 4" strokeWidth="1.300" /><path d="M13 2l9 5-9 5z" fill="#ccc" /><path d="M12 13l5 9H7z" /></g>,
  ePens: <g opacity=".5">{pencil(-2, "#c9b5b5")}{pencil(2, "#b9b9b0")}{pencil(6, "#b9a5a5")}</g>,
  ePen: <g opacity=".5">{pencil(3)}</g>,
  eSave: <g opacity=".4"><path d="M2 2h19v19H2z" fill="#c5c9c9" stroke={G} /><rect x="6" y="3" width="11" height="7" fill="#fff" /><path d="M7 5h9M7 7.500h9" stroke={G} /><rect x="6" y="14" width="9" height="7" fill="#eee" stroke={G} /><path d="M14 22l2-5 5-6 2 2-5 6z" fill="#ccc" stroke={G} /></g>,
  eAdd: <g opacity=".5"><circle cx="10" cy="3.500" r="2.800" fill="#ddd" stroke="#999" /><circle cx="20" cy="6" r="2.800" fill="#ddd" stroke="#999" /><circle cx="3" cy="12.500" r="2.800" fill="#ddd" stroke="#999" /><Badge /></g>,
  eVert: <g opacity=".5" stroke={G} fill="#ddd"><path d="M4 22L5 4l14 0M9 9l12 12" fill="none" strokeWidth="1.600" /><path d="M2 2h6v6H2z" /><path d="M8 22l10-10M14 9l5 5" strokeWidth="2" /></g>,
  eAttr: <g opacity=".45"><path d="M2 2h20v5H2zM2 9.500h20v5H2zM2 17h20v5H2z" fill="#c9cdb9" stroke={G} /><path d="M8 20l2-5 8-12 3 2-8 12z" fill="#e5d5d5" stroke={G} /></g>,
  eDel: <g opacity=".4" fill="#d3b7b7" stroke="#8f7d7d"><path d="M4 7h16v15H4zM2 3.500h20V7H2zM9 1.500h6v2H9z" /><path d="M8 9v11M12 9v11M16 9v11" /></g>,
  eCut: <g opacity=".45" stroke={G} fill="none" strokeWidth="1.600"><path d="M2 6l15 8M2 17l15-7" /><circle cx="19.500" cy="15.500" r="2.600" /><circle cx="19.500" cy="8.500" r="2.600" /></g>,
  eCopy: <g opacity=".5" fill="#fff" stroke={G}><path d="M8 2h8l3 3v11H8z" /><path d="M4 8h9l3 3v11H4z" /><path d="M6 13h7M6 15.500h7M6 18h7" /></g>,
  ePaste: <g opacity=".5" fill="#ddd" stroke={G}><path d="M4 3h16v20H4z" /><path d="M7 5h10v15H7z" fill="#fff" /><path d="M9 1.500h6V5H9z" /><path d="M9 9h6M9 12h6M9 15h6" /></g>,
  eUndo: <g opacity=".45">{undo("#c5bfb5", G)}</g>,
  eRedo: <g opacity=".45">{redo("#c5c9c0", G)}</g>,
  dsm: <g><path d="M1 10l10-4 5 13-10 4z" fill="#d0592e" stroke="#8d3b1c" strokeWidth=".8" /><path d="M3 6l12-3 3 13-12 3z" fill="#f0c030" stroke="#a07b10" strokeWidth=".8" /><path d="M8 1l15 1.500-1 14-14-1z" fill="#6f94c8" stroke={D} strokeWidth=".9" />{Plus}</g>,
  gpkg: <g><circle cx="12" cy="7.500" r="7" fill="#6f94c8" stroke={D} /><path d="M8 3l3 2-2 3zM14 3l4 4-4 3z" fill="#dfe8f5" /><path d="M.8 9.500l10 5v9l-10-5zM23 9.500l-12 5v9L23 18z" fill="#f0d31c" stroke="#7d6b08" />{Star}</g>,
  shp: <g>{vline}{Star}</g>,
  spl: <g>{feather}{Star}</g>,
  mem: <g><path d="M5 2v18M8.500 2v18M12 2v18M15.500 2v18M19 2v18" stroke={D} strokeWidth="1.200" /><rect x="2" y="5.500" width="20" height="11" fill="#6f94c8" stroke={D} />{Star}</g>,
  virt: <g><path d="M1.500 1.500h21v21h-21z" fill="#b9cbe6" stroke={D} strokeWidth="1.200" /><path d="M3.500 3.500L10 19 16 4.500h5" fill="none" stroke={D} strokeWidth="1.400" />{Star}</g>,
  lab: tag("#f5e528", "#b8a400"),
  diag: <g><circle cx="9" cy="8" r="7.500" fill="#c8150f" /><path d="M9 8V.5a7.500 7.500 0 0 1 6 3zM9 8L2.500 4A7.500 7.500 0 0 1 9 .5z" fill="#f2e21c" /><path d="M9 8L2.500 4a7.500 7.500 0 0 0 5 11.300z" fill="#3aa64b" /><rect x="8" y="17" width="5" height="6.500" fill="#f2c81c" stroke="#222" strokeWidth=".5" /><rect x="13" y="10" width="4.500" height="13.500" fill="#2faf5f" stroke="#222" strokeWidth=".5" /><rect x="17.500" y="16" width="4.500" height="7.500" fill="#d02018" stroke="#222" strokeWidth=".5" /></g>,
  labPin: <g>{tag("#dbe9fb", "#5b8fd8", "ab")}<path d="M19 8v8" stroke="#999" strokeWidth="1.500" /><circle cx="19" cy="18.500" r="4.500" fill="#b5352f" stroke="#7d1f1b" strokeWidth=".7" /></g>,
  labRed: tag("#fbd5d5", "#e01b1b", "abc", "#d01010"),
  l1: <g opacity=".4">{tag("#ddddc8", G, "ab", "#777")}<circle cx="19" cy="18.500" r="4" fill="#b99" /></g>,
  l2: <g opacity=".4">{tag("#ddddc8", G, "abc", "#777")}<path d="M5 20q9-7 18 0q-9 6-18 0z" fill="#eee" stroke="#555" /><circle cx="14" cy="20" r="2.200" fill="#555" /></g>,
  l3: <g opacity=".45">{tag("#ddddc8", G, "abc", "#777")}<Badge t="r" c="#999" /></g>,
  l4: <g opacity=".45">{tag("#ddddc8", G, "abc", "#777")}<Badge t="o" c="#999" /></g>,
  l5: <g opacity=".45">{tag("#ddddc8", G, "abc", "#777")}<Badge t="e" c="#a9a98d" /></g>,
  db: cyl,
  hex: <g><path d="M7 3h10.500L22 12l-4.500 9H7L2 12z" fill="#fff" stroke="#111" strokeWidth="1.200" />{[[7, 3, 1.400], [17.500, 3, 1.400], [22, 12, 2.500], [17.500, 21, 1.400], [7, 21, 1.400], [2, 12, 2.500]].map(([x, y, r], i) => <circle key={i} cx={x} cy={y} r={r} fill="#e00" />)}</g>,
  gAdd: <g>{bigGlobe}{Plus}<path d="M20.500 21h4l-2 3z" fill="#222" /></g>,
  gFind: <g>{bigGlobe}<rect x="14.500" y="14.500" width="9" height="9" rx="1.500" fill="#5f9e62" /><circle cx="18.500" cy="18.500" r="2" fill="none" stroke="#fff" strokeWidth="1.200" /><path d="M20 20l2 2" stroke="#fff" strokeWidth="1.200" /></g>,
  plug: <g><rect x=".5" y=".5" width="23" height="23" rx="3" fill="#f0d93c" /><path d="M4.500 17l3-3q0-6 6.500-6l4.500 4.500q-.5 6-7 5.500L8 20q-3-.5-3.500-3z" fill="#2f8a1c" stroke="#174a0c" strokeWidth="1" /><path d="M14 8.500l2.500-4M17.500 12l3.500-3.500" stroke="#222" strokeWidth="1.500" /></g>,
  gBin: <g><circle cx="12" cy="10" r="9.500" fill="#b5cbe6" stroke="#3a4f6b" strokeWidth="1.300" /><path d="M4 5l7 1 1 4-5 2-4-2zM14 2l6 4-4 5-2-3z" fill="#4a6c94" /><path d="M2.500 10h19M12 1v18" stroke="#f1f5fb" strokeWidth=".8" />{binocs}</g>,
  orb: <g><rect width="24" height="24" fill="#fff" /><circle cx="6" cy="7" r="4.200" fill="#6f8fc0" /><circle cx="19.500" cy="12" r="2.300" fill="#fff" stroke="#d99a2c" strokeWidth="1.500" /><circle cx="5" cy="19" r="1.800" fill="#6f8fc0" /><path d="M12 3c4 0 6 3 7 6M19 15c-1 4-6 6-11 5M4 12v5" fill="none" stroke="#bbb" strokeWidth=".8" /></g>,
  help: <g><path d="M2 1.500h20v21H2z" fill="#6f94c8" stroke="#2d3b50" strokeWidth="1.400" /><path d="M2 1.500h4.500v21H2z" fill="#2d3b50" /><text x="14.500" y="17.500" fontSize="16" textAnchor="middle" fill="#fff" fontFamily="Liberation Serif, serif">?</text></g>,
  topo: <g><path d="M7 6c5 0 8-4 15-3.500 0 8-2 10-9 14-5 3-10-1-8-5z" fill="#6f94c8" stroke={D} strokeWidth=".9" /><path d="M3 3l9 4L21 3M12 7L4 21" fill="none" stroke={D} strokeWidth=".9" />{[[3, 3], [21, 3], [12, 8.500], [3, 21]].map(([x, y], i) => <circle key={i} cx={x} cy={y} r="2.300" fill="#f2e84a" stroke="#8d8420" strokeWidth=".7" />)}<path d="M13 17l3.500 6L22.500 13l-6 5z" fill="#f6e23a" stroke="#7d7010" strokeWidth=".8" /></g>,
  sync: <g><path d="M1 1h21v22H1z" fill="#eef5fd" stroke="#7ba2d4" strokeWidth="1.300" /><path d="M1 1h21v3.500H1z" fill="#f3d24a" /><path d="M1 8h21M1 12h21M1 16h21M6 4v18M11 4v18M16 4v18" stroke="#b8cfec" strokeWidth=".8" /><path d="M9 14c1-6 8-7 11-3l2-1.500v6h-6l1.500-2c-3-2-5-1-5.500 1zM23 17c-1 6-8 7-11 3l-2 1.500v-6h6l-1.500 2c3 2 5 1 5.500-1z" fill="#8fc93a" stroke="#4f8a1a" strokeWidth=".7" /></g>,
  cross: <g fill="none"><path d="M15 0v12M15 16v8M1 14h11M18 14h6" stroke="#444" strokeWidth=".9" /><circle cx="15" cy="14.500" r="4.500" stroke="#c0504a" strokeWidth="1.100" strokeDasharray="4.500 2.500" /></g>,
  ring: <circle cx="12" cy="12" r="8.500" fill="none" stroke="#000" strokeWidth="6.500" />,
  xy: <g><path d="M4 20C4 9 10 4 20 3.500" fill="none" stroke="#3d82c4" strokeWidth="2" />{node(4, 21)}{node(21, 3.500)}<text x="15" y="18" fontSize="10" fontWeight="700" textAnchor="middle" fill="#111" fontFamily="Roboto, sans-serif">XY</text></g>,
  arcR: <g><path d="M4 20C4 10 12 9 21 3.500" fill="none" stroke="#3d82c4" strokeWidth="2" />{node(4, 21)}{node(21, 3.500)}{node(7.500, 13, "#e33")}{node(13, 7, "#e33")}</g>,
  arcX: <g><path d="M4 20C5 12 10 8 21 3.500" fill="none" stroke="#3d82c4" strokeWidth="2" />{node(4, 21)}{node(21, 3.500)}<path d="M8.500 4l1 14M2 11l13-1.500M4 6l10 10M14 5L4 15" stroke="#d01010" strokeWidth="1.300" /></g>,
  zig: <g><path d="M2 11h9v-1l9-5M2 11v4M7 20l2-6h13V8" fill="none" stroke="#1d3f66" strokeWidth="2.400" />{node(19, 4.500)}{node(7, 20)}<path d="M9 9l3 7M12 8l3 7M15 7l2 7" stroke="#d01010" strokeWidth="1.500" /></g>,
  rul2: <g><path d="M2 6q10-3 20 0" stroke="#3d5f9c" fill="none" strokeWidth="1.800" /><path d="M1.500 12q10.500-5 21 0v8q-10.500-3-21 0z" fill="#cfcfcf" stroke="#666" /><path d="M5 11.500v4M8.500 10.500v4M12 10v4M15.500 10.500v4M19 11.500v4" stroke="#444" /></g>,
  n123: <g><text x="12" y="11" fontSize="11.500" fontWeight="700" textAnchor="middle" fill="#111" fontFamily="Open Sans, sans-serif">123</text><path d="M4 18q8-4 16 0" fill="none" stroke="#3d82c4" strokeWidth="3" />{node(3.500, 18.500)}{node(20.500, 18.500)}</g>,
  blobs: <g stroke="#111" strokeWidth="1.200"><path d="M1.500 6C1 1 8 0 12 2c5-2 11-1 10.500 3.500C22 10 18 11 14 10 9 15 1.500 12 1.500 6z" fill="#3d82c4" /><path d="M9 14c2-3 6-1 6 2 3 0 5 3 3 6-3 3-7 1-7-3-2-1-3-3-2-5z" fill="#e33a30" /></g>,
  az: <g opacity=".4"><text x="7" y="9" fontSize="9" fontWeight="700" textAnchor="middle" fill="#777">Az</text><text x="4.500" y="18" fontSize="9" textAnchor="middle" fill="#777">d</text><path d="M5 20L19 4" stroke={G} />{node(19, 4, "#999")}<circle cx="4.500" cy="20.500" r="2" fill="#eee" stroke={G} /><Badge /></g>,
  h1: <g opacity=".42">{hist}</g>,
  h2: <g opacity=".42">{hist}<path d="M1 12l5-4v2.500h12V8l5 4-5 4v-2.500H6V16z" fill="#eee" stroke={G} /></g>,
  br: <g opacity=".5">{sun}<Badge t="up" c="#9c9c85" /></g>,
  br2: <g opacity=".5">{sun}<Badge t="dn" c="#9c9c85" /></g>,
  co: <g opacity=".45">{contrast}<Badge t="up" c="#9c9c85" /></g>,
  co2: <g opacity=".45">{contrast}<Badge t="dn" c="#9c9c85" /></g>,
  ga: <g opacity=".45">{gamma}<Badge t="up" c="#9c9c85" /></g>,
  ga2: <g opacity=".45">{gamma}<Badge t="dn" c="#9c9c85" /></g>,
  magnet: <g transform="rotate(45 12 12)"><path d="M3.500 2h5.500v10a3 3 0 0 0 6 0V2h5.500v10a8.500 8.500 0 0 1-17 0z" fill="#cc1414" stroke="#7d0a0a" strokeWidth=".8" /><path d="M3.500 2h5.500v4H3.500zM15 2h5.500v4H15z" fill="#fff" stroke="#999" strokeWidth=".6" /></g>,
  snapv: snapV,
  pts: <g fill="#e9e9e9" stroke="#888"><rect x="4.500" y="4" width="3.500" height="3.500" /><rect x="16" y="6" width="3.500" height="3.500" /><rect x="10" y="16" width="3.500" height="3.500" /></g>,
  t1: <g fill="none" stroke="#8fbf8a" strokeWidth="1.800"><path d="M3 1l5 9v12M8 10l13-4" /><circle cx="8" cy="10.500" r="2.300" fill="#aaa" stroke="#666" strokeWidth="1" /></g>,
  t2: <g><path d="M10 3c4-3 12-1 13 4 0 5-6 5-8 3z" fill="#b5b5b5" stroke="#666" /><path d="M3 3c4-3 11 0 11 5 0 4-2 5 0 9 1 4-6 7-9 3-2-4 2-7 0-10C2 8 1 5 3 3z" fill="#8fc48a" stroke="#555" /></g>,
  t3: <g fill="none" stroke="#8fbf8a" strokeWidth="1.800"><path d="M2 1l20 22M22 1L2 23" /><circle cx="12" cy="12" r="2.300" fill="#aaa" stroke="#666" strokeWidth="1" /></g>,
  t4: <g><path d="M22 1L2 23" stroke="#8fbf8a" strokeWidth="1.800" /><path d="M5 5l7 6 3-2 3 10-7-6-3 2z" fill="#f6cf1c" stroke="#a88b10" strokeWidth=".8" transform="rotate(-8 12 12)" /></g>,
  t5: <g fill="none" stroke="#8fbf8a" strokeWidth="1.800"><path d="M4 20L7 8l11 10" /><circle cx="7" cy="7" r="2" fill="#aaa" stroke="#666" strokeWidth="1" /><circle cx="4" cy="20" r="2" fill="#aaa" stroke="#666" strokeWidth="1" /><circle cx="19" cy="18" r="2" fill="#aaa" stroke="#666" strokeWidth="1" /><path d="M12 2l3-1 6 12-1 3-3-2z" fill="#f0dc5a" stroke="#a88b10" strokeWidth=".8" /></g>,
  py: <g><path d="M11 1.500c-5 0-5 2-5 4V8h5.500v1H4c-2.500 0-3.500 2-3.500 4.500S1.500 18 4 18h2v-2.500c0-2 1.500-3.500 3.500-3.500H14c1.500 0 2.500-1 2.500-2.500v-4c0-3-1.500-4-5.500-4z" fill="#3a74a8" /><path d="M12 22.500c5 0 5-2 5-4V16h-5.500v-1H18c2.500 0 3.500-2 3-5-.3-2-1.500-3-3-3h-.500v2.500c0 2-1.500 3.500-3.500 3.500H9.500C8 13 7 14 7 15.500v4c0 2 2 3 5 3z" fill="#f7cf3d" /><circle cx="8.500" cy="4.500" r="1" fill="#fff" /><path d="M16 16.500l4 2.500-4 2.500M19 23h5" stroke="#444" fill="none" strokeWidth="1.300" /></g>,
  grid1: <g><rect width="16" height="18" fill="#333" /><path d="M0 4h4v4H0zM8 0h4v4H8zM4 8h4v4H4zM0 13h4v4H0z" fill="#888" /><path d="M4 0v18M8 0v18M12 0v18M0 4h16M0 8h16M0 12h16" stroke="#666" strokeWidth=".6" /><rect x="10" y="10" width="14" height="14" fill="#f6e23a" /><path d="M10 14.500h14M10 19h14M14.500 10v14M19 10v14" stroke="#555" strokeWidth=".9" /><path d="M12 1c8-1 10 3 9 9h2.500L18.500 14.500 13.500 10h3c0-4-1-6-4.500-6z" fill="#f0a01c" stroke="#b36f0c" strokeWidth=".5" /><rect x="19" y="19" width="5" height="5" fill="#5f84b8" /></g>,
  clk2: <g><rect width="24" height="24" fill="#2b4a80" /><path d="M14 12h10v5H14zM0 18h13v6H0z" fill="#5f7fae" /><path d="M14 17h5v7h-5zM0 0h5v5H0z" fill="#1c3158" /><circle cx="11" cy="9.500" r="8.800" fill="#2b4a80" stroke="#fff" strokeWidth="2.200" /><path d="M7 7l4 4 6-1" stroke="#fff" strokeWidth="2.300" fill="none" /></g>,
  fold: <g><path d="M1.500 4h8l2 3h11v15h-21z" fill="#c99b3a" stroke="#7d5c18" /><path d="M1 22l2-11h20.500l-1 11z" fill="#efd79a" stroke="#7d5c18" /><path d="M8 5c6-4 11 0 10 6h3.500L16 17l-5.500-6H14c0-3-3-5-6-6z" fill="#8ede2a" stroke="#3f7d0f" strokeWidth=".9" /></g>,
  fire: <g><rect width="24" height="24" rx="1.500" fill="#b83f44" /><path d="M1.500 0h21Q24 0 24 1.500V10H0V1.500Q0 0 1.500 0z" fill="#cf6a78" /><path d="M12 6c1 4 5 5 4.500 9-1 4.500-8 4.500-9 0C7 12 10 12 12 6zM12 12c2 2 1.500 5 0 5s-2-2.500 0-5z" fill="none" stroke="#fff" strokeWidth="1" /></g>,
  four: <g><rect width="24" height="24" fill="#fff" /><path d="M12 0L2 6v6l10-6 10 6V6z" fill="#ef8a4a" /><path d="M2 6v12l10-12z" fill="#d8653c" /><path d="M2 12v6l10 6 10-6v-6L12 20z" fill="#3f9e8a" /><path d="M2 12l10-7 10 7-10 9z" fill="#57b082" /><text x="12" y="18" fontSize="17" fontWeight="900" textAnchor="middle" fill="#fff" fontFamily="Lato, sans-serif">4</text></g>,
  stack: <g fill="none" strokeWidth="1.300"><path d="M1 15V1h12" stroke="#c5e3e8" /><path d="M5 19V5h12" stroke="#38b3b8" /><rect x="9.500" y="9" width="14" height="14" fill="#f7fafa" stroke="#2d3f4f" /><circle cx="16.500" cy="16" r="4.300" stroke="#38b3b8" /><path d="M13.500 17l3-3 1 4 3-3" stroke="#38b3b8" strokeWidth=".9" /></g>,
  earth: <g><circle cx="12" cy="12" r="11.500" fill="#14184a" stroke="#7d82c0" strokeWidth="1" strokeDasharray="2 1" /><circle cx="12" cy="12" r="8.500" fill="#0c0f2c" /><path d="M6 8c2-3 6-3 8-2 3 3 4 7 2 11-4 1-8-2-10-9z" fill="#3f6fc0" /><path d="M7 8l5-2 1 3-3 2zM12 12l4 1 0 4-3-1z" fill="#c8c090" /></g>,
  binoc: <g><circle cx="12" cy="6.500" r="5.200" fill="#dcdcdc" stroke="#aaa" strokeWidth="2.400" strokeDasharray="2.400 1.300" /><circle cx="12" cy="6.500" r="2" fill="#fff" /><path d="M8 9l-6.500 9a4.500 4.500 0 1 0 9 2v-5h3v5a4.500 4.500 0 1 0 9-2L16 9l-2.500 3h-3z" fill="#3b3b3b" /><circle cx="5.500" cy="19.500" r="3" fill="#a0522d" stroke="#111" /><circle cx="18.500" cy="19.500" r="3" fill="#a0522d" stroke="#111" /></g>,
  ref: <g><circle cx="12" cy="12" r="12" fill="#f57c00" /><text x="12" y="15.500" fontSize="9.500" fontWeight="700" textAnchor="middle" fill="#fff" fontFamily="Open Sans, sans-serif">Ref</text></g>,
  bivar: <g stroke="#111" strokeWidth="1.100">{["#6fa0b5", "#5a7a8a", "#5f4a55", "#a8c5cf", "#a89aa5", "#9c5a62", "#ededed", "#d3a9a9", "#b55a5a"].map((c, i) => <rect key={i} x={0.5 + (i % 3) * 7.700} y={0.5 + Math.floor(i / 3) * 7.700} width="7.700" height="7.700" fill={c} />)}</g>,
  leaf: <g><path d="M12 23.500L.5 14.500 12 8l11.500 6.500z" fill="#3f8f9c" /><path d="M12 20.500L.5 11.500 12 5l11.500 6.500z" fill="#e3f0ea" stroke="#6fb0a0" strokeWidth=".8" /><path d="M12 17C4 14 5 8 8 4c1 2 2 3 3 4 1-4 5-6 9-8 1 8 0 14-8 17z" fill="#8bc83f" /><path d="M12 17c-1-5 2-9 5-13" fill="none" stroke="#b9e070" strokeWidth="1" /></g>,
  gridS: <g><path d="M1 1h18.500v18H1zM7 1v18M13 1v18M1 7h18.500M1 13h18.500" fill="#f4f9ff" stroke="#6f9fd4" strokeWidth="1.200" />{Star}</g>,
  tri3: <g><path d="M4 16L12 7l8 9" fill="none" stroke="#3a86cc" strokeWidth="4.500" strokeLinejoin="round" /><g fill="#3a86cc"><circle cx="12" cy="7" r="3.300" /><circle cx="4" cy="15.500" r="3.600" /><circle cx="20" cy="15.500" r="3.600" /></g></g>,
  pca: <g><rect width="24" height="24" fill="#fafafa" /><text x="12" y="7.500" fontSize="7.500" textAnchor="middle" fill="#111" fontFamily="Open Sans, sans-serif">PCA</text><rect x="1" y="10" width="11" height="13" fill="#333" /><rect x="12" y="10" width="11" height="13" fill="#fff" stroke="#333" /><path d="M5 20c-2-3 1-7 4-7 1 3 0 6-4 7z" fill="#fff" /><path d="M15 20c-1-4 2-7 5-7 1 4-2 6-5 7z" fill="#333" /></g>,
  layers: <g stroke="#111" strokeWidth="1.400"><path d="M3 9c6-2 3-7 10-6 5 1 8-1 8 1-1 5-9 4-18 5z" fill="#5fc3e8" /><path d="M3 14c6-2 3-6 10-5 5 1 8-1 8 1-1 5-9 4-18 4z" fill="#f2e21c" /><path d="M3 20c6-2 3-6 10-5 5 1 8-1 8 1-1 5-9 4-18 4z" fill="#4fd83a" /><path d="M12.500 0v4M12.500 20v4" stroke="#e01010" /></g>,
  infoG: <g><circle cx="9" cy="9" r="8.500" fill="#228b22" /><text x="9" y="15" fontSize="16" fontWeight="700" fontStyle="italic" textAnchor="middle" fill="#fff" fontFamily="Liberation Serif, serif">i</text>{cursor}</g>,
  swipe: <g><rect x="1" y="1" width="22" height="22" fill="#c5e0f5" stroke="#6f94b8" strokeWidth="2" /><path d="M12.500 2H22v13q-6 1-9.500-6z" fill="#c5d83a" /><path d="M12 2v20" stroke="#fff" strokeWidth="1.500" /><path d="M11 8.500v7L7 12zM13 8.500v7l4-3.500z" fill="#111" /></g>,
  eo: <g><rect width="24" height="24" fill="#fafafa" /><text x="13" y="9.500" fontSize="9" textAnchor="middle" fill="#2d3f7f" fontFamily="Lato, sans-serif">open</text><text x="17.500" y="19" fontSize="9" textAnchor="middle" fill="#2d3f7f" fontFamily="Lato, sans-serif">EO</text><path d="M0 16q4-5 9-1l-3 1 4 4-2-6z" fill="#7d5530" stroke="#7d5530" /></g>,
  bow: <g fill="#8cc47c" stroke="#2d4f25" strokeWidth="1.200"><path d="M1.500 3q5 3 10.500 3t10.500-3v17q-3 4-6 0-4-5-8 0-3 4-7 0z" /><path d="M1.500 11.500h21M12 6v10" /></g>,
  s1: <g opacity=".4" fill="none" stroke={G}><path d="M3 21C3 10 9 4 20 4" strokeWidth="1.800" /><rect x="1.500" y="19" width="4" height="4" fill="#eee" /><rect x="17" y="2" width="4" height="4" fill="#eee" /><rect x="5" y="9" width="4" height="4" fill="#eee" /><Badge /></g>,
  s2: <g opacity=".4"><circle cx="10" cy="10" r="8" fill="none" stroke={G} strokeWidth="2" /><Badge /></g>,
  s3: <g opacity=".4"><ellipse cx="9" cy="12" rx="9" ry="5" fill="none" stroke={G} strokeWidth="2" transform="rotate(-25 9 12)" /><circle cx="9" cy="11" r="3" fill="none" stroke={G} /><Badge /></g>,
  s4: <g opacity=".4"><rect x="3" y="4" width="15" height="13" fill="none" stroke={G} strokeWidth="2" /><Badge /></g>,
  s5: <g opacity=".4"><path d="M2 10L10 2l8 4-2 12-10 1z" fill="none" stroke={G} strokeWidth="2" /><Badge /></g>,
  sel: <g><path d="M2 2h20v19H2z" fill="none" stroke="#333" strokeDasharray="2.500 1.500" /><rect x="3" y="3" width="13" height="12" fill="#f8ec2f" stroke="#c4a800" /><path d="M11 8l3 14 3-4 5 6 2-2-5-5 4-2z" fill="#fff" stroke="#333" /></g>,
  selE: <g><rect x="8" y="8" width="13" height="13" fill="#f8ec2f" stroke="#c4a800" strokeWidth="1.200" /><text x="7" y="13" fontSize="23" fontStyle="italic" textAnchor="middle" fill="#6b2a78" fontFamily="Liberation Serif, serif">ε</text></g>,
  desel: <g><rect x="1.500" y="2" width="13" height="12" fill="#f8ec2f" stroke="#c4a800" strokeWidth="1.200" /><rect x="6" y="6" width="13" height="12" fill="#f8ec2f" stroke="#c4a800" strokeWidth="1.200" /><rect x="13" y="13.500" width="10.500" height="10" rx="1" fill="#d94040" /><circle cx="18.200" cy="18.500" r="3.300" fill="none" stroke="#fff" strokeWidth="1.300" /><path d="M16 21l4.500-5" stroke="#fff" strokeWidth="1.300" /></g>,
  selL: <g><rect x="1.500" y="2" width="14" height="13" fill="#f8ec2f" stroke="#c4a800" strokeWidth="1.200" /><path d="M19.500 23.500c-1-4-4-4-3.500-7a3.500 3.500 0 0 1 7 0c0 3-2.500 3-3.500 7z" fill="#6f94b8" /><circle cx="19.500" cy="16.500" r="1.200" fill="#fff" /></g>,
  crest: <g><rect width="24" height="24" fill="#fff" /><path d="M1 2q5 2 11-1 6 3 11 1c0 12-4 18-11 21C5 20 1 14 1 2z" fill="#c9c9c9" stroke="#777" strokeWidth="1.100" /><path d="M2 11q10-4 20 0M5 14q7-3 14 0M6 17q6-4 12 0" fill="none" stroke="#777" /><path d="M4.500 5h4v3h-4zM15.500 5h4v3h-4z" fill="#777" /><circle cx="12" cy="6" r="2.500" fill="#eee" stroke="#555" /><circle cx="12" cy="15" r="2" fill="#fff" stroke="#666" /></g>,
  prof: <g><rect x=".5" y="0" width="23" height="24" rx="3" fill="#eed83e" /><path d="M8 1.500h8.500q4 3 2.500 7l-3 6q-1 6-8 8" fill="none" stroke="#e01b1b" strokeWidth="2.800" /><path d="M3 4h6l4 4v4l-3 3q0 5-8 7" fill="none" stroke="#111" strokeWidth="1.300" /></g>,
  osm: <g><path d="M18 18l5 5" stroke="#222" strokeWidth="3.500" /><circle cx="11" cy="11" r="9" fill="#37c5e0" stroke="#222" strokeWidth="2.400" /><path d="M11.500 16c-1-4-3.500-5-3-7.500a3.200 3.200 0 0 1 6.200 0c.3 2.500-2.200 3.500-3.200 7.500z" fill="#1c3e78" /><circle cx="11.500" cy="8.800" r="1.200" fill="#37c5e0" /></g>,
  plot: <g fill="none"><path d="M4 1v19h19M2 3l2-2 2 2M21 18l2 2-2 2" stroke="#888" strokeWidth="1.300" /><path d="M5 14c6-1 4-5 9-6 5 0 4-5 8-6" stroke="#b02aa0" strokeWidth="1.600" /><path d="M5 19c5-6 8-4 16-8" stroke="#4f94b8" strokeWidth="1.400" /></g>,
  edc: <g><path d="M5 1H.500v22H5M19 1h4.500v22H19M5 1h14M5 23h14" fill="#fff" stroke="#2d5f98" strokeWidth="1.600" /><text x="12" y="16" fontSize="11" fontWeight="500" textAnchor="middle" fill="#2d5f98" fontFamily="Roboto, sans-serif">EDC</text></g>,
  sld: <g>{["#5fe3d8", "#7ff29a", "#f2d20a", "#4fd8f2", "#2faf4a", "#f28a1c", "#4fa8d8", "#b5e80a", "#d8505a"].map((c, i) => <rect key={i} x={(i % 3) * 8} y={Math.floor(i / 3) * 8} width="8" height="8" fill={c} />)}<g fontSize="8.500" textAnchor="middle" fill="#111" fontFamily="Liberation Sans, sans-serif"><text x="4" y="7">S</text><text x="12" y="15">L</text><text x="20" y="23">D</text></g></g>,
  lvec: <g>{vline}{Plus}</g>,
  lras: <g transform="scale(1.050)">{checker("#2d4568", "#2d4568", "#7b9ccd")}<g transform="scale(.95)">{Plus}</g></g>,
  lmesh: <g><rect x="1.500" y="1.500" width="21" height="20" fill="#a9c1e3" stroke="#223a58" strokeWidth="1.400" /><path d="M1.500 14h21M13 1.500v12.500M1.500 1.500L13 14M13 1.500L1.500 14M22.500 1.500L13 14M8 14v7.500M1.500 18h6.500M14 14v7.500" stroke="#223a58" fill="none" />{Plus}</g>,
  lcsv: <g><path d="M5 5c2-5 11-4 10 4-1 6-5 8-10 8 3-2 5-4 5-6-4 1-6-3-5-6z" fill="#7b9ccd" stroke={D} strokeWidth="1.200" />{Plus}</g>,
  lspl: <g>{feather}{Plus}</g>,
  lvirt: <g><rect x="1.500" y="1.500" width="21" height="20" fill="#d3dfef" stroke="#7b8fb0" strokeWidth="1.200" /><path d="M3.500 3.500L9 17 15 3.500h6" fill="none" stroke={D} strokeWidth="1.400" />{Plus}</g>,
  lpg: <g><path d="M2 3c2-2.500 5-1.500 6-1.500s4-1 6 0c3-1 5 1 4.500 5-.5 5-2 7-4 7-1-.5-1.500 0-1.500 3 0 2-3 3.500-4 1l-1-8c-1 1.500-3.500 3-5 .5C1.500 8 1 5 2 3z" fill="#6f94c8" stroke={D} strokeWidth="1.500" /><path d="M8 3c-1.500 3-.5 6 .5 7.500M13 3c1.500 4 1.500 6 0 9" fill="none" stroke={D} strokeWidth="1.100" />{Plus}</g>,
  lwms: <g><circle cx="12" cy="11.500" r="10.800" fill="#a9c1e3" stroke="#6f84a5" /><path d="M3 8l4-3 3 3-2 5-3-1zM10 3l5 1-2 3zM14 8l5-1 2 4-4 1-2 5-2-3z" fill="#3f5878" /><path d="M1.500 11.500h21M12 1v21M5 4q7 7 14 0" fill="none" stroke="#e9f0fa" strokeWidth=".8" />{Plus}</g>,
  lwcs: <g>{globe("#fff", "#3f5f94")}<circle cx="12" cy="11.500" r="10.800" fill="none" stroke="#2d4568" />{Plus}</g>,
  lwfs: <g>{globe("#9fb9de", "#fff")}<path d="M4 5l6 13L16 5h5" fill="none" stroke="#223a58" strokeWidth="1.200" /><g fill="#fff" stroke="#223a58"><circle cx="5" cy="5" r="1.500" /><circle cx="15.500" cy="5" r="1.500" /><circle cx="20.500" cy="5" r="1.500" /><circle cx="10" cy="18" r="1.500" /></g>{Plus}</g>,
  broom,
  addg: <g fill="#eee" stroke="#888" strokeWidth="1.300"><path d="M2 10h10v12H2zM6 6h9v12H6z" /><rect x="10" y="3" width="10" height="14" /><path d="M15 14V2l-3 3" fill="none" stroke={D} strokeWidth="1.600" />{Plus}</g>,
  eye: <g><path d="M1 12q11-12 22 0q-11 11-22 0z" fill="#eee" stroke="#999" strokeWidth="1.300" /><circle cx="12" cy="11.500" r="5" fill="#6f94c8" stroke={D} /><circle cx="12" cy="11.500" r="2" fill="#223" /><path d="M2 7q10-8 20 0" fill="none" stroke="#aaa" /></g>,
  funnel: <g><path d="M2 2h20v3l-7 8v10.500l-5-2V13L2 5z" fill="#6f94c8" stroke={D} strokeWidth=".9" /><rect x="1" y="1" width="22" height="4" fill="#f6e23a" stroke="#a8920e" strokeWidth=".7" /></g>,
  eps: <g><text x="7" y="15" fontSize="27" fontStyle="italic" textAnchor="middle" fill="#6b2a78" fontFamily="Liberation Serif, serif">ε</text><path d="M11 23v-8q0-3 4-3h4q4 0 4 3v8h-4v-6h-4v6z" fill="#ccc" stroke="#888" strokeWidth=".9" /></g>,
  expd: <g><path d="M1 3h12M3 3v18M3 11h4M3 19h4" stroke="#888" fill="none" strokeWidth="1.400" /><rect x="6" y="8" width="5" height="5" fill="#f0b429" stroke="#b8801c" strokeWidth=".6" /><rect x="6" y="16" width="5" height="5" fill="#f0b429" stroke="#b8801c" strokeWidth=".6" /><path d="M14 1h6v12h4l-7 8-7-8h4z" fill="#6f94c8" stroke={D} strokeWidth="1.100" /></g>,
  coll: <g><path d="M1 3h12M3 3v18M3 11h4M3 19h4" stroke="#888" fill="none" strokeWidth="1.400" /><rect x="6" y="8" width="5" height="5" fill="#f0b429" stroke="#b8801c" strokeWidth=".6" /><rect x="6" y="16" width="5" height="5" fill="#f0b429" stroke="#b8801c" strokeWidth=".6" /><path d="M14 21h6V9h4l-7-8-7 8h4z" fill="#6f94c8" stroke={D} strokeWidth="1.100" /></g>,
  rem: <g><rect x="1" y="2" width="18" height="17" fill="#f4f4f4" stroke="#777" strokeWidth="1.400" /><rect x="14" y="15.500" width="10" height="8" rx="1.500" fill="#e05252" /><path d="M16 19.500h6" stroke="#fff" strokeWidth="1.800" /></g>,
  tabLab: <g transform="translate(0 2)">{tag("#f5e528", "#b8a400")}</g>,
  tabMask: <g><path d="M2 12q-2-5 3-5 2-4 6-2 4-3 7 1 6 0 5 6-1 5-5 4-4 3-7 1-6 2-9-5z" fill="#e3e6f5" /><text x="12" y="15.500" fontSize="11" fontWeight="700" textAnchor="middle" fill="#333" fontFamily="Open Sans, sans-serif">abc</text></g>,
  cube,
  dgm: <g><path d="M5 14V5h14v9M12 7v8" stroke="#c99a2e" fill="none" strokeWidth="2.200" /><rect x="7" y="1" width="10" height="7" fill="#e06060" stroke="#b03a3a" strokeWidth=".7" /><rect x="1" y="16" width="10" height="7" fill="#f6e94a" stroke="#b8a420" strokeWidth=".7" /><rect x="13" y="16" width="10" height="7" fill="#9fc0f0" stroke="#5f84b8" strokeWidth=".7" /></g>,
  hist2: <g><path d="M8 2l7 4-6 5V8.500c-3 0-3 3-1 6-7-3-8-10 0-10z" fill="#7fb58a" stroke="#4f8a5a" strokeWidth=".7" /><path d="M17 9l-7 5 6 5v-2.500c3 0 3 3 0 6 8-3 9-10 1-10.500z" fill="#e08a3a" stroke="#a85f1c" strokeWidth=".7" /></g>,
};

function Icon({ n, className = "h-6 w-6" }: { n: string; className?: string }) {
  return <svg viewBox="0 0 24 24" className={`${className} shrink-0 overflow-visible`}>{ICONS[n]}</svg>;
}
const Caret = ({ className = "w-2", up = false, fill = "#606060" }: { className?: string; up?: boolean; fill?: string }) => (
  <svg viewBox="0 0 8 5" className={`${className} shrink-0`}><path d={up ? "M0 5h8L4 0z" : "M0 0h8L4 5z"} fill={fill} /></svg>
);
const Handle = ({ first = false }: { first?: boolean }) => (
  <div className={`flex shrink-0 items-center ${first ? "w-[10.5px] pl-[2px]" : "w-4 pl-[8px]"}`}>
    <div className="h-[19px] w-[6px] bg-[radial-gradient(#b4b4b4_0.7px,transparent_0.9px)] bg-[size:3px_3px]" />
  </div>
);

function Tools({ list }: { list: string }) {
  return (
    <>
      {list.trim().split(/\s+/).map((k, i) => {
        if (k === "|") return <Handle key={i} />;
        if (k === "|0") return <Handle key={i} first />;
        if (k === "v") return <div key={i} className="flex w-3 shrink-0 items-center justify-center pt-[2px]"><Caret /></div>;
        if (k === "/") return <div key={i} className="flex w-[7px] shrink-0 items-center justify-center"><div className="h-[18px] w-px bg-[#c8c8c8]" /></div>;
        const on = k.startsWith("*");
        const menu = k.endsWith("^");
        const n = k.replace("*", "").replace("^", "");
        return (
          <div key={i} className="relative flex w-[33px] shrink-0 items-center justify-center">
            {on && <div className="absolute inset-x-[0.5px] top-[4px] h-[31px] rounded-[3px] border border-[#b3b3b3] bg-[#dcdcdc]" />}
            <Icon n={n} className="relative h-6 w-6" />
            {menu && <Caret className="absolute right-[2px] bottom-[7px] w-[5px]" />}
          </div>
        );
      })}
    </>
  );
}
const Bar = ({ children, className = "h-[39px]" }: { children: React.ReactNode; className?: string }) => (
  <div className={`flex shrink-0 items-stretch border-b border-[#b9b9b9] bg-linear-to-b from-[#f7f7f7] to-[#ececec] ${className}`}>{children}</div>
);

/* ---------- form controls ---------- */
const box = "flex items-center border border-[#b4b4b4] rounded-[3px]";
function Combo({ className = "", children }: { className?: string; children: React.ReactNode }) {
  return (
    <div className={`${box} shrink-0 bg-linear-to-b from-white to-[#f0f0f0] pr-[7px] ${className}`}>
      <div className="flex flex-1 items-center whitespace-nowrap">{children}</div>
      <Caret />
    </div>
  );
}
function Spin({ className = "", children, dimUp = false, dimDown = false }: { className?: string; children: React.ReactNode; dimUp?: boolean; dimDown?: boolean }) {
  return (
    <div className={`flex shrink-0 items-stretch rounded-[3px] border border-[#b4b4b4] bg-white ${className}`}>
      <div className="flex flex-1 items-center pl-[5px] whitespace-nowrap">{children}</div>
      <div className="flex w-[14px] flex-col items-center justify-center gap-[5px] border-l border-[#c4c4c4] bg-linear-to-b from-white to-[#f2f2f2]">
        <Caret up className="w-[7px]" fill={dimUp ? "#b0b0b0" : "#606060"} />
        <Caret className="w-[7px]" fill={dimDown ? "#b0b0b0" : "#606060"} />
      </div>
    </div>
  );
}
const Check = () => (
  <div className="flex h-[14px] w-[14px] shrink-0 items-center justify-center border border-[#b4b4b4] bg-white">
    <svg viewBox="0 0 10 10" className="h-[9px] w-[9px]"><path d="M1 5.500L4 9L9 .5" fill="none" stroke="#222" strokeWidth="1.900" /></svg>
  </div>
);
const DockButtons = () => (
  <div className="flex gap-[3px]">
    <svg viewBox="0 0 11 11" className="h-[11px] w-[11px]"><rect x=".5" y=".5" width="10" height="10" rx="2" fill="none" stroke="#666" /><path d="M4.500 2.500h4v4h-4zM2.500 4.500v4h4" fill="none" stroke="#666" /></svg>
    <svg viewBox="0 0 11 11" className="h-[11px] w-[11px]"><rect x=".5" y=".5" width="10" height="10" rx="2" fill="none" stroke="#666" /><path d="M3 3l5 5M8 3l-5 5" stroke="#555" strokeWidth="1.800" /></svg>
  </div>
);
const SearchGlyph = ({ className = "h-3 w-3" }: { className?: string }) => (
  <svg viewBox="0 0 12 12" className={`${className} shrink-0`}><circle cx="5" cy="5" r="4.200" fill="none" stroke="#999" strokeWidth="1.100" /><path d="M8 8l3.600 3.600" stroke="#999" strokeWidth="1.200" /></svg>
);

/* ---------- layers panel ---------- */
type Layer = { name: string; icon: React.ReactNode; check?: boolean; plain?: boolean; sel?: boolean; open?: boolean };
const sw = (c: string) => <div className={`h-4 w-4 border border-black/25 ${c}`} />;
const LAYERS: Layer[] = [
  { name: "schools", check: true, sel: true, icon: <div className="h-[3px] w-[3px] rounded-full bg-[#c3a94a]" /> },
  { name: "australia", check: true, open: true, icon: <svg viewBox="0 0 13 13" className="h-[13px] w-[13px]"><rect width="13" height="13" fill="#dde6f2" />{[[0, 0], [8.600, 0], [4.300, 4.300], [0, 8.600], [4.300, 0], [8.600, 4.300], [4.300, 8.600]].map(([x, y], i) => <rect key={i} x={x} y={y} width="4.400" height="4.400" fill={i < 4 ? "#2d3f5c" : "#a9c1e3"} />)}</svg> },
  { name: "-11", plain: true, icon: sw("bg-black") },
  { name: "1335", plain: true, icon: null },
  { name: "AU_level2", check: true, icon: sw("bg-[#c4453d]") },
  { name: "australia hospitals", check: true, icon: sw("bg-[#955f2c]") },
  { name: "AU_territory_state", check: true, icon: sw("bg-[#93c07a]") },
  { name: "AU_admin_boundary", check: true, icon: sw("bg-[#a97f63]") },
];

function LayersPanel() {
  return (
    <div className="flex w-[304px] shrink-0 flex-col border-l-2 border-[#bdbdbd]">
      <div className="flex h-[22px] items-center justify-between pr-[8px] pl-[3px]">
        <span className="text-[11px] text-[#333]">Layers</span>
        <DockButtons />
      </div>
      <div className="flex h-[29px] items-center pb-[3px] pl-[3px]">
        <div className="flex h-[23px] w-6 items-center justify-center rounded-[3px] border border-[#b3b3b3] bg-[#dcdcdc]"><Icon n="broom" className="h-4 w-4" /></div>
        <div className="flex w-[27px] justify-center"><Icon n="addg" className="h-4 w-4" /></div>
        <div className="relative flex w-[25px] justify-center"><Icon n="eye" className="h-4 w-4" /><Caret className="absolute right-[2px] -bottom-[1px] w-[5px]" /></div>
        <div className="flex w-[24px] justify-center"><Icon n="funnel" className="h-4 w-4" /></div>
        <div className="flex w-[25px] justify-center"><Icon n="eps" className="h-4 w-4" /></div>
        <div className="flex w-[11px] justify-center"><Caret className="w-[7px]" /></div>
        <div className="flex w-[26px] justify-center"><Icon n="expd" className="h-4 w-4" /></div>
        <div className="flex w-[25px] justify-center"><Icon n="coll" className="h-4 w-4" /></div>
        <div className="flex w-[24px] justify-center"><Icon n="rem" className="h-4 w-4" /></div>
      </div>
      <div className="mr-[6px] flex-1 border border-l-0 border-[#bdbdbd] bg-white">
        {LAYERS.map((l) => (
          <div key={l.name} className={`flex h-[18px] items-center ${l.sel ? "bg-[#5cab25]" : ""}`}>
            <div className="flex w-[23px] justify-center pr-[2px]">{l.open && <Caret className="w-[7px]" />}</div>
            <div className="w-5">{l.check && <Check />}</div>
            <div className="flex w-4 justify-center">{l.icon}</div>
            <span className={`ml-[6px] text-[13px] leading-none ${l.plain ? "tracking-[-0.01em] text-[#222]" : "font-bold tracking-[0.003em]"} ${l.sel ? "text-[#eefae3] underline" : "text-[#2c2c2c]"}`}>{l.name}</span>
          </div>
        ))}
      </div>
    </div>
  );
}

/* ---------- styling panel ---------- */
const SYMBOLS: [string, React.ReactNode][] = [
  ["topo airport", <path d="M12 5l1.200 1.500v4L19 14v1.500l-5.800-1.500v3l1.500 1.500v.8L12 18.500l-2.700.8v-.8l1.500-1.500v-3L5 15.500V14l5.800-3.500v-4z" fill="#111" />],
  ["topo camp", <g><rect x="4" y="4" width="16" height="16" rx="2" fill="#fff" stroke="#111" strokeWidth="1.100" /><path d="M10.800 7.300l1.200 1.500 1.200-1.500" stroke="#111" fill="none" strokeWidth=".9" /><path d="M12 8l4.500 9h-9z" fill="#111" /><path d="M12 11.500l1.700 5h-3.400z" fill="#fff" /><path d="M12 12.500v4" stroke="#999" strokeWidth=".6" /></g>],
  ["topo hospital", <g><circle cx="12" cy="12" r="7.500" fill="#fff" stroke="#e01f26" strokeWidth="1.200" /><path d="M12 7v10M7 12h10" stroke="#e01f26" strokeWidth="2.200" /></g>],
  ["topo pop capital", <g><circle cx="12" cy="12" r="4.500" fill="#fff" stroke="#444" strokeWidth=".8" /><circle cx="12" cy="12" r="1.500" fill="#111" /></g>],
  ["topo pop city", <circle cx="12" cy="12" r="3.700" fill="#fff" stroke="#666" strokeWidth=".8" />],
  ["topo pop house", <rect x="10.200" y="10.200" width="3.600" height="3.600" fill="#111" />],
  ["topo pop village", <path d="M12 9.500l2.800 5.500H9.200z" fill="#111" />],
];
const DataDefined = () => (
  <svg viewBox="0 0 26 18" className="ml-[9px] h-[18px] w-[26px] shrink-0"><path d="M1 9l5-6v12z" fill="#a8a8a8" stroke="#777" strokeWidth=".6" /><rect x="6.500" y="1.500" width="11" height="15" fill="#f7f7f7" stroke="#777" /><path d="M8.500 5h7M8.500 12.500h7" stroke="#555" strokeWidth="1.300" /><path d="M7 9h10" stroke="#999" strokeWidth=".8" /><path d="M22 13h4l-2 2.500z" fill="#666" /></svg>
);
const btn = "flex items-center justify-center rounded-[3px] border border-[#b4b4b4] bg-linear-to-b from-white to-[#f0f0f0]";

function StylingPanel() {
  return (
    <div className="flex w-[508px] shrink-0 flex-col pl-[9px] text-[13px] tracking-[-0.01em]">
      <div className="flex h-[23px] items-center justify-between pb-px">
        <span className="text-[11px] text-[#333] tracking-[0.02em]">Layer Styling</span>
        <div><DockButtons /></div>
      </div>
      <Combo className="h-6 w-[497px]">
        <svg viewBox="0 0 14 14" className="mr-[4px] ml-[6px] h-[14px] w-[14px]"><g fill="#fff" stroke="#aaa"><circle cx="3" cy="11" r="1.300" /><circle cx="5" cy="4" r="1.300" /><circle cx="12" cy="1.500" r="1.300" /></g></svg>
        schools
      </Combo>
      <div className="flex">
        <div className="mr-[3px] flex h-[734px] w-[38px] shrink-0 flex-col items-center">
          <div className="flex h-[38px] items-end pb-[6px]"><Icon n="broom" className="h-[22px] w-[24px] opacity-70" /></div>
          <div className="flex w-full flex-1 flex-col items-center bg-[#666]">
            {["tabLab", "tabMask", "cube", "dgm", "hist2"].map((n) => (
              <div key={n} className="flex h-8 items-center pr-[7px]"><Icon n={n} className="h-[22px] w-[22px]" /></div>
            ))}
          </div>
        </div>
        <div className="flex w-[456px] flex-col">
          <Combo className="mt-[6px] h-6">
            <svg viewBox="0 0 13 14" className="mr-[4px] ml-[7px] h-[14px] w-[13px]"><g fill="#35c45c" stroke="#146b2c" strokeWidth=".8"><rect x=".5" y=".5" width="10.500" height="3" /><rect x="2" y="5.500" width="10.500" height="3" /><rect x=".5" y="10.500" width="10.500" height="3" /></g></svg>
            Single Symbol
          </Combo>
          <div className="flex h-[142px] items-start">
            <svg viewBox="0 0 118 127" className="h-[127px] w-[118px] shrink-0"><path d="M56.500 21v100M6 71.500h100" stroke="#a5a5a5" strokeWidth="1" /><circle cx="56.500" cy="72" r="2.800" fill="#e3c220" stroke="#333" /></svg>
            <div className="mt-[15px] h-[112px] w-[270px] border border-[#b9b9b9] bg-white">
              <div className="flex h-[18px] items-center bg-[#dfdfdf] pl-[7px] font-bold text-black">
                <Caret className="w-[7px]" />
                <div className="mr-[12px] ml-[14px] h-[6px] w-[6px] rounded-full border border-[#777] bg-[#dccb5a]" />
                Marker
              </div>
              <div className="flex h-[18px] items-center pl-[48px] tracking-[-0.015em]">
                <div className="mr-[11px] h-[6px] w-[6px] rounded-full border border-[#333] bg-[#e3c220]" />
                Simple Marker
              </div>
            </div>
            <div className="mt-[6px] ml-[6px] grid grid-cols-2 gap-x-[6px] gap-y-[4px]">
              {[
                <path d="M6 1h4v5h5v4h-5v5H6v-5H1V6h5zM8 3.500v9M3.500 8h9" fill="#fff" stroke="#4f8a52" strokeWidth="1.100" />,
                <path d="M8 3l6 10H2z" fill="#d5d9dc" stroke="#b9bdc0" />,
                <path d="M1 6h14v4H1zM3.500 8h9" fill="#fff" stroke="#dcc3c3" />,
                <path d="M8 13l6-10H2z" fill="#cdd1d4" stroke="#b9bdc0" />,
                <path d="M1 1h9v13H1zM4 3h10v12H4zM10 11h4v4h-4z" fill="#f7f7f7" stroke="#cfcfcf" />,
                <g><path d="M5.500 6V3.500q3.500-3.500 5.500 0V8" fill="none" stroke="#d3d3d3" strokeWidth="1.500" /><path d="M2.500 8h11v7h-11z" fill="#dcdccc" stroke="#cfcfc5" /></g>,
              ].map((p, i) => (
                <div key={i} className={`${btn} h-6 w-[28px] ${i ? "opacity-80" : ""}`}><svg viewBox="0 0 16 16" className="h-[15px] w-[15px]">{p}</svg></div>
              ))}
            </div>
          </div>
          <div className="h-[2px] border-t border-[#b9b9b9] bg-white" />
          <div className="mt-[7px] flex h-6 w-[447px] items-center"><span className="w-[47px]">Unit</span><Combo className="h-6 w-[400px] pl-[4px]">Millimeters</Combo></div>
          <div className="mt-px flex h-[23px] w-[447px] items-center">
            <span className="w-[48px] tracking-[-0.03em]">Opacity</span>
            <div className="relative mr-[3px] mb-[2px] flex h-[14px] w-[296px] items-center">
              <div className="h-[5px] w-full rounded-sm border border-[#3f6fc0] bg-[#6ba3f5]" />
              <div className="absolute top-0 right-0 h-[14px] w-[13px] rounded-[3px] border border-[#a9a9a9] bg-white" />
            </div>
            <Spin className="h-[23px] w-[100px]" dimUp>100,0 %</Spin>
          </div>
          <div className="flex h-[28px] w-[447px] items-center">
            <span className="w-[47px]">Color</span>
            <div className={`${btn} h-[28px] w-[388px]`}><div className="h-4 w-[378px] rounded-[4px] bg-[#e3c220]" /></div>
            <div className={`${btn} h-[28px] w-3`}><Caret className="w-[7px]" /></div>
          </div>
          <div className="mt-[6px] flex h-[23px] items-center"><span className="w-[56px] pb-[5px]">Size</span><Spin className="h-[23px] w-[355px]">2,00000</Spin><DataDefined /></div>
          <div className="mt-[9px] flex h-[23px] items-center"><span className="w-[56px]">Rotation</span><Spin className="h-[23px] w-[355px]">0,00 °</Spin><DataDefined /></div>
          <div className="mt-[6px] h-[2px] w-[447px] border-t border-[#b9b9b9] bg-white" />
          <div className="mt-[4px] flex items-center">
            <div className="flex h-[25px] w-[417px] items-stretch rounded-[3px] border border-[#b4b4b4] bg-white">
              <div className="flex flex-1 items-center pl-[10px]"><SearchGlyph className="mr-[7px] h-3 w-3" />Topology</div>
              <svg viewBox="0 0 13 10" className="mr-[9px] h-[10px] w-[13px] self-center"><path d="M4 0h9v10H4L0 5z" fill="#999" /><path d="M5.500 2.500l5 5M10.500 2.500l-5 5" stroke="#fff" strokeWidth="1.300" /></svg>
              <div className="flex w-5 items-center justify-center border-l border-[#c4c4c4]"><Caret /></div>
            </div>
            <Icon n="style" className="ml-[11px] h-[15px] w-[15px]" />
          </div>
          <div className="mt-[3px] h-[277px] w-[447px] border border-[#b9b9b9] bg-white pt-[35px] pl-[2px]">
            <div className="grid w-[404px] grid-cols-4">
              {SYMBOLS.map(([name, g]) => (
                <div key={name} className="flex h-[100px] flex-col items-center">
                  <svg viewBox="0 0 24 24" className="h-6 w-6">{g}</svg>
                  <span className="mt-[29px] text-[9px] leading-[14px] tracking-[0.025em] whitespace-nowrap text-black">{name}</span>
                </div>
              ))}
            </div>
          </div>
          <div className="mt-[6px] flex h-6 w-[447px] items-center text-[#333]">
            <div className="flex h-[23px] w-6 items-center justify-center rounded-[3px] border border-[#b3b3b3] bg-[#dcdcdc]">
              <svg viewBox="0 0 14 14" className="h-[14px] w-[14px]"><rect width="14" height="14" fill="#c5dcf7" />{[1, 5.500, 10].map((y) => [1, 5.500, 10].map((x) => <rect key={`${x}-${y}`} x={x} y={y} width="3" height="3" fill="#6f9be0" />))}</svg>
            </div>
            <svg viewBox="0 0 14 14" className="ml-[5px] h-[14px] w-[14px]"><rect x=".5" y=".5" width="13" height="13" fill="#fff" stroke="#9fc0e8" /><rect width="14" height="4" fill="#a9c9f0" /><path d="M2 6.500h3M2 9h3M2 11.500h3M7 6.500h5M7 9h5M7 11.500h5" stroke="#9fc0e8" /></svg>
            <div className="flex-1" />
            <div className={`${btn} h-6 w-[96px] tracking-[-0.022em]`}>Save Symbol...</div>
            <div className={`${btn} ml-[6px] h-6 w-[81px] gap-[7px]`}>Advanced<Caret className="w-[5px]" /></div>
          </div>
          <div className="flex h-[45px] items-center pt-[15px] font-bold text-black">
            <svg viewBox="0 0 7 10" className="mr-[10px] ml-[5px] h-[10px] w-[7px]"><path d="M0 0l7 5-7 5z" fill="#444" /></svg>
            <span className="text-[13px] tracking-normal">Layer Rendering</span>
          </div>
          <div className="flex h-6 items-center text-[#333]">
            <div className={`${btn} h-[23px] w-6`}><svg viewBox="0 0 24 24" className="h-4 w-4">{undo("#e8923a", "#b8661c")}</svg></div>
            <div className={`${btn} ml-[6px] h-[23px] w-6`}><svg viewBox="0 0 24 24" className="h-4 w-4">{redo("#8fc48a", "#5a9456")}</svg></div>
            <div className="flex-1" />
            <Check /><span className="ml-[5px] w-[82px] tracking-[0.01em] whitespace-nowrap">Live update</span>
            <div className={`${btn} h-6 w-[80px]`}>Apply</div>
          </div>
        </div>
      </div>
    </div>
  );
}

const LEFT: [string, boolean][] = [["lvec", false], ["lras", false], ["lmesh", false], ["lcsv", false], ["lspl", false], ["lvirt", false], ["lpg", true], ["lwms", true], ["lwcs", false], ["lwfs", true], ["shp", true]];

export default function App() {
  return (
    <div className="flex h-[986px] w-[1918px] flex-col overflow-hidden border-r border-black bg-[#efefef] font-[Inter,'Noto_Sans',sans-serif] text-black">
      <div className="relative flex h-[21px] shrink-0 items-center justify-center border-b border-[#a9a9a9] bg-linear-to-b from-[#e4e4e4] to-[#cfcfcf]">
        <div className="absolute top-[4px] left-[6px] flex gap-2">
          {[0, 1, 2].map((i) => <div key={i} className="h-3 w-3 rounded-full border border-[#7e7c80] bg-[#8f8d91]" />)}
        </div>
        <span className="pt-[2px] pr-[6px] text-[13px] leading-none tracking-[-0.015em] text-[#444]">*Untitled Project — QGIS</span>
      </div>
      <Bar><Tools list="|0 new open save layout wrench style | *hand pan zin zout full zsel zlay znat zlast znext nmap n3d nbm sbm clock refresh | info table abacus gear sigma ruler v *tip play v text v | dArc dTri dMove v dRot dSimp dRing dPart dFill dDelR dDelP dResh dOff dVrot dTrim dSplit dSplit dMerge dAlign dFlip v" /></Bar>
      <Bar>
        <Tools list="|0 ePens^ ePen eSave eAdd eVert v eAttr eDel eCut eCopy ePaste eUndo eRedo | dsm gpkg shp spl mem / virt / | lab diag / labPin labRed / l1 l2 l3 l4 l5 | db | hex gAdd gFind plug gBin | orb | help | topo sync cross" />
        <div className="flex-1" />
        <Tools list="| ring v xy arcR arcX v zig rul2 n123 blobs v az" />
        <span className="mr-[2px] flex w-[15px] items-center justify-center text-[15px] text-[#555]">»</span>
      </Bar>
      <Bar>
        <Tools list="|0 h1 h2 h1 h2 br br2 co co2 ga ga2 | *magnet snapv^ *pts^" />
        <Spin className="my-auto h-[22px] w-[98px] text-[13px]" dimDown>0</Spin>
        <Combo className="my-auto ml-[2px] h-6 w-[98px] pl-[4px] text-[13px]">px</Combo>
        <Tools list="t1 t2^ t3 t4 v t5 | py grid1 clk2 fold fire four stack earth binoc ref bivar leaf gridS tri3 pca layers infoG swipe eo bow | s1 v s2 v s3 v s4 v s5 v" />
      </Bar>
      <Bar className="h-[38px]">
        <Tools list="|0 sel v selE v desel v selL | crest | prof | osm" />
        <Combo className="my-auto h-6 w-[94px] pl-[4px] text-[13px] tracking-[-0.01em]">Philippines</Combo>
        <div className={`${box} my-auto mr-px ml-px h-6 w-[125px] bg-white pl-[3px] text-[13px] tracking-[-0.02em] text-[#999]`}>Search for...</div>
        <Tools list="| plot | | edc | sld |" />
      </Bar>
      <div className="flex h-[785px] shrink-0">
        <div className="flex w-[49px] shrink-0 flex-col bg-linear-to-r from-[#f7f7f7] to-[#ececec]">
          <div className="mt-[6px] mb-px ml-[16px] h-[6px] w-[18px] bg-[radial-gradient(#b4b4b4_0.7px,transparent_0.9px)] bg-[size:3px_3px]" />
          {LEFT.map(([n, m], i) => (
            <div key={i} className="flex h-8 items-center gap-[7px] pl-[6px]"><Icon n={n} />{m && <Caret className="w-[7px]" />}</div>
          ))}
        </div>
        <LayersPanel />
        <div className="mt-px w-[1056px] shrink-0 overflow-hidden border border-[#b9b9b9] bg-white"><AustraliaMap /></div>
        <StylingPanel />
      </div>
      <div className="flex h-[25px] shrink-0 items-start overflow-hidden pt-[3px] text-[11px] tracking-[-0.01em] whitespace-nowrap text-[#222] *:shrink-0">
        <div className={`${box} ml-[2px] h-6 w-[212px] bg-white pl-[8px] text-[13px] tracking-[-0.022em] text-[#909090]`}><SearchGlyph className="mr-[9px] h-3 w-3" />Type to locate (⌘K)</div>
        <span className="ml-[8px] w-[837px] leading-6 tracking-[-0.005em] text-black">2 legend entries removed.</span>
        <span className="w-[61px] leading-6">Coordinate</span>
        <div className={`${box} h-6 w-[87px] justify-center bg-white`}>163.94,-19.10</div>
        <svg viewBox="0 0 16 16" className="mt-[3px] ml-[3px] h-4 w-4"><path d="M5 5q5-4 7 1t-3 8-6-1 2-8z" fill="#bbb" stroke="#444" strokeWidth="1.200" /><path d="M8.500 4l-2 6M2 2l3 3M4 1l2 3M15 1l-4 4M12 1L9 4M2 14L13 4" stroke="#444" strokeWidth="1" /></svg>
        <span className="ml-[14px] w-[32px] leading-6">Scale</span>
        <div className="flex h-6 w-[94px] items-stretch rounded-[3px] border border-[#b4b4b4] bg-white"><span className="flex flex-1 items-center pl-[3px]">1:14154968</span><div className="flex w-5 items-center justify-center border-l border-[#c4c4c4]"><Caret /></div></div>
        <svg viewBox="0 0 13 16" className="mt-[4px] ml-[11px] h-4 w-[13px]"><path d="M3 8V4.500q0-3.500 3.500-3.500T10 4.500V8" fill="none" stroke="#888" strokeWidth="1.600" /><rect x=".5" y="7" width="12" height="8.500" rx="1" fill="#707070" /></svg>
        <span className="ml-[9px] w-[52px] leading-6">Magnifier</span>
        <Spin className="h-6 w-[89px]">100%</Spin>
        <span className="ml-[9px] w-[53px] leading-6">Rotation</span>
        <Spin className="h-6 w-[91px]">0,0 °</Spin>
        <div className="mt-[4px] ml-[6px]"><Check /></div>
        <span className="ml-[5px] w-[53px] leading-6 text-[#444]">Render</span>
        <svg viewBox="0 0 16 16" className="mt-[4px] h-[15px] w-[15px]"><circle cx="8" cy="8" r="7" fill="#aaa" stroke="#777" /><path d="M1 8h14M8 1v14M2.500 4.500h11M2.500 11.500h11" stroke="#eee" strokeWidth=".8" /><ellipse cx="8" cy="8" rx="3.500" ry="7" fill="none" stroke="#eee" strokeWidth=".8" /></svg>
        <span className="ml-[2px] w-[83px] leading-6 text-[#444]">EPSG:4326</span>
        <svg viewBox="0 0 17 15" className="mt-[4px] h-[15px] w-[17px]"><path d="M8.500.5c5 0 8 2.500 8 6 0 3-2.500 5.500-6.500 6-1 1.500-3 2-4.500 2 1-.8 1-1.500 1-2-4-.5-6-3-6-6 0-3.500 3-6 8-6z" fill="#666" /><g fill="#eee"><circle cx="5" cy="6.500" r="1.100" /><circle cx="8.500" cy="6.500" r="1.100" /><circle cx="12" cy="6.500" r="1.100" /></g></svg>
      </div>
    </div>
  );
}
